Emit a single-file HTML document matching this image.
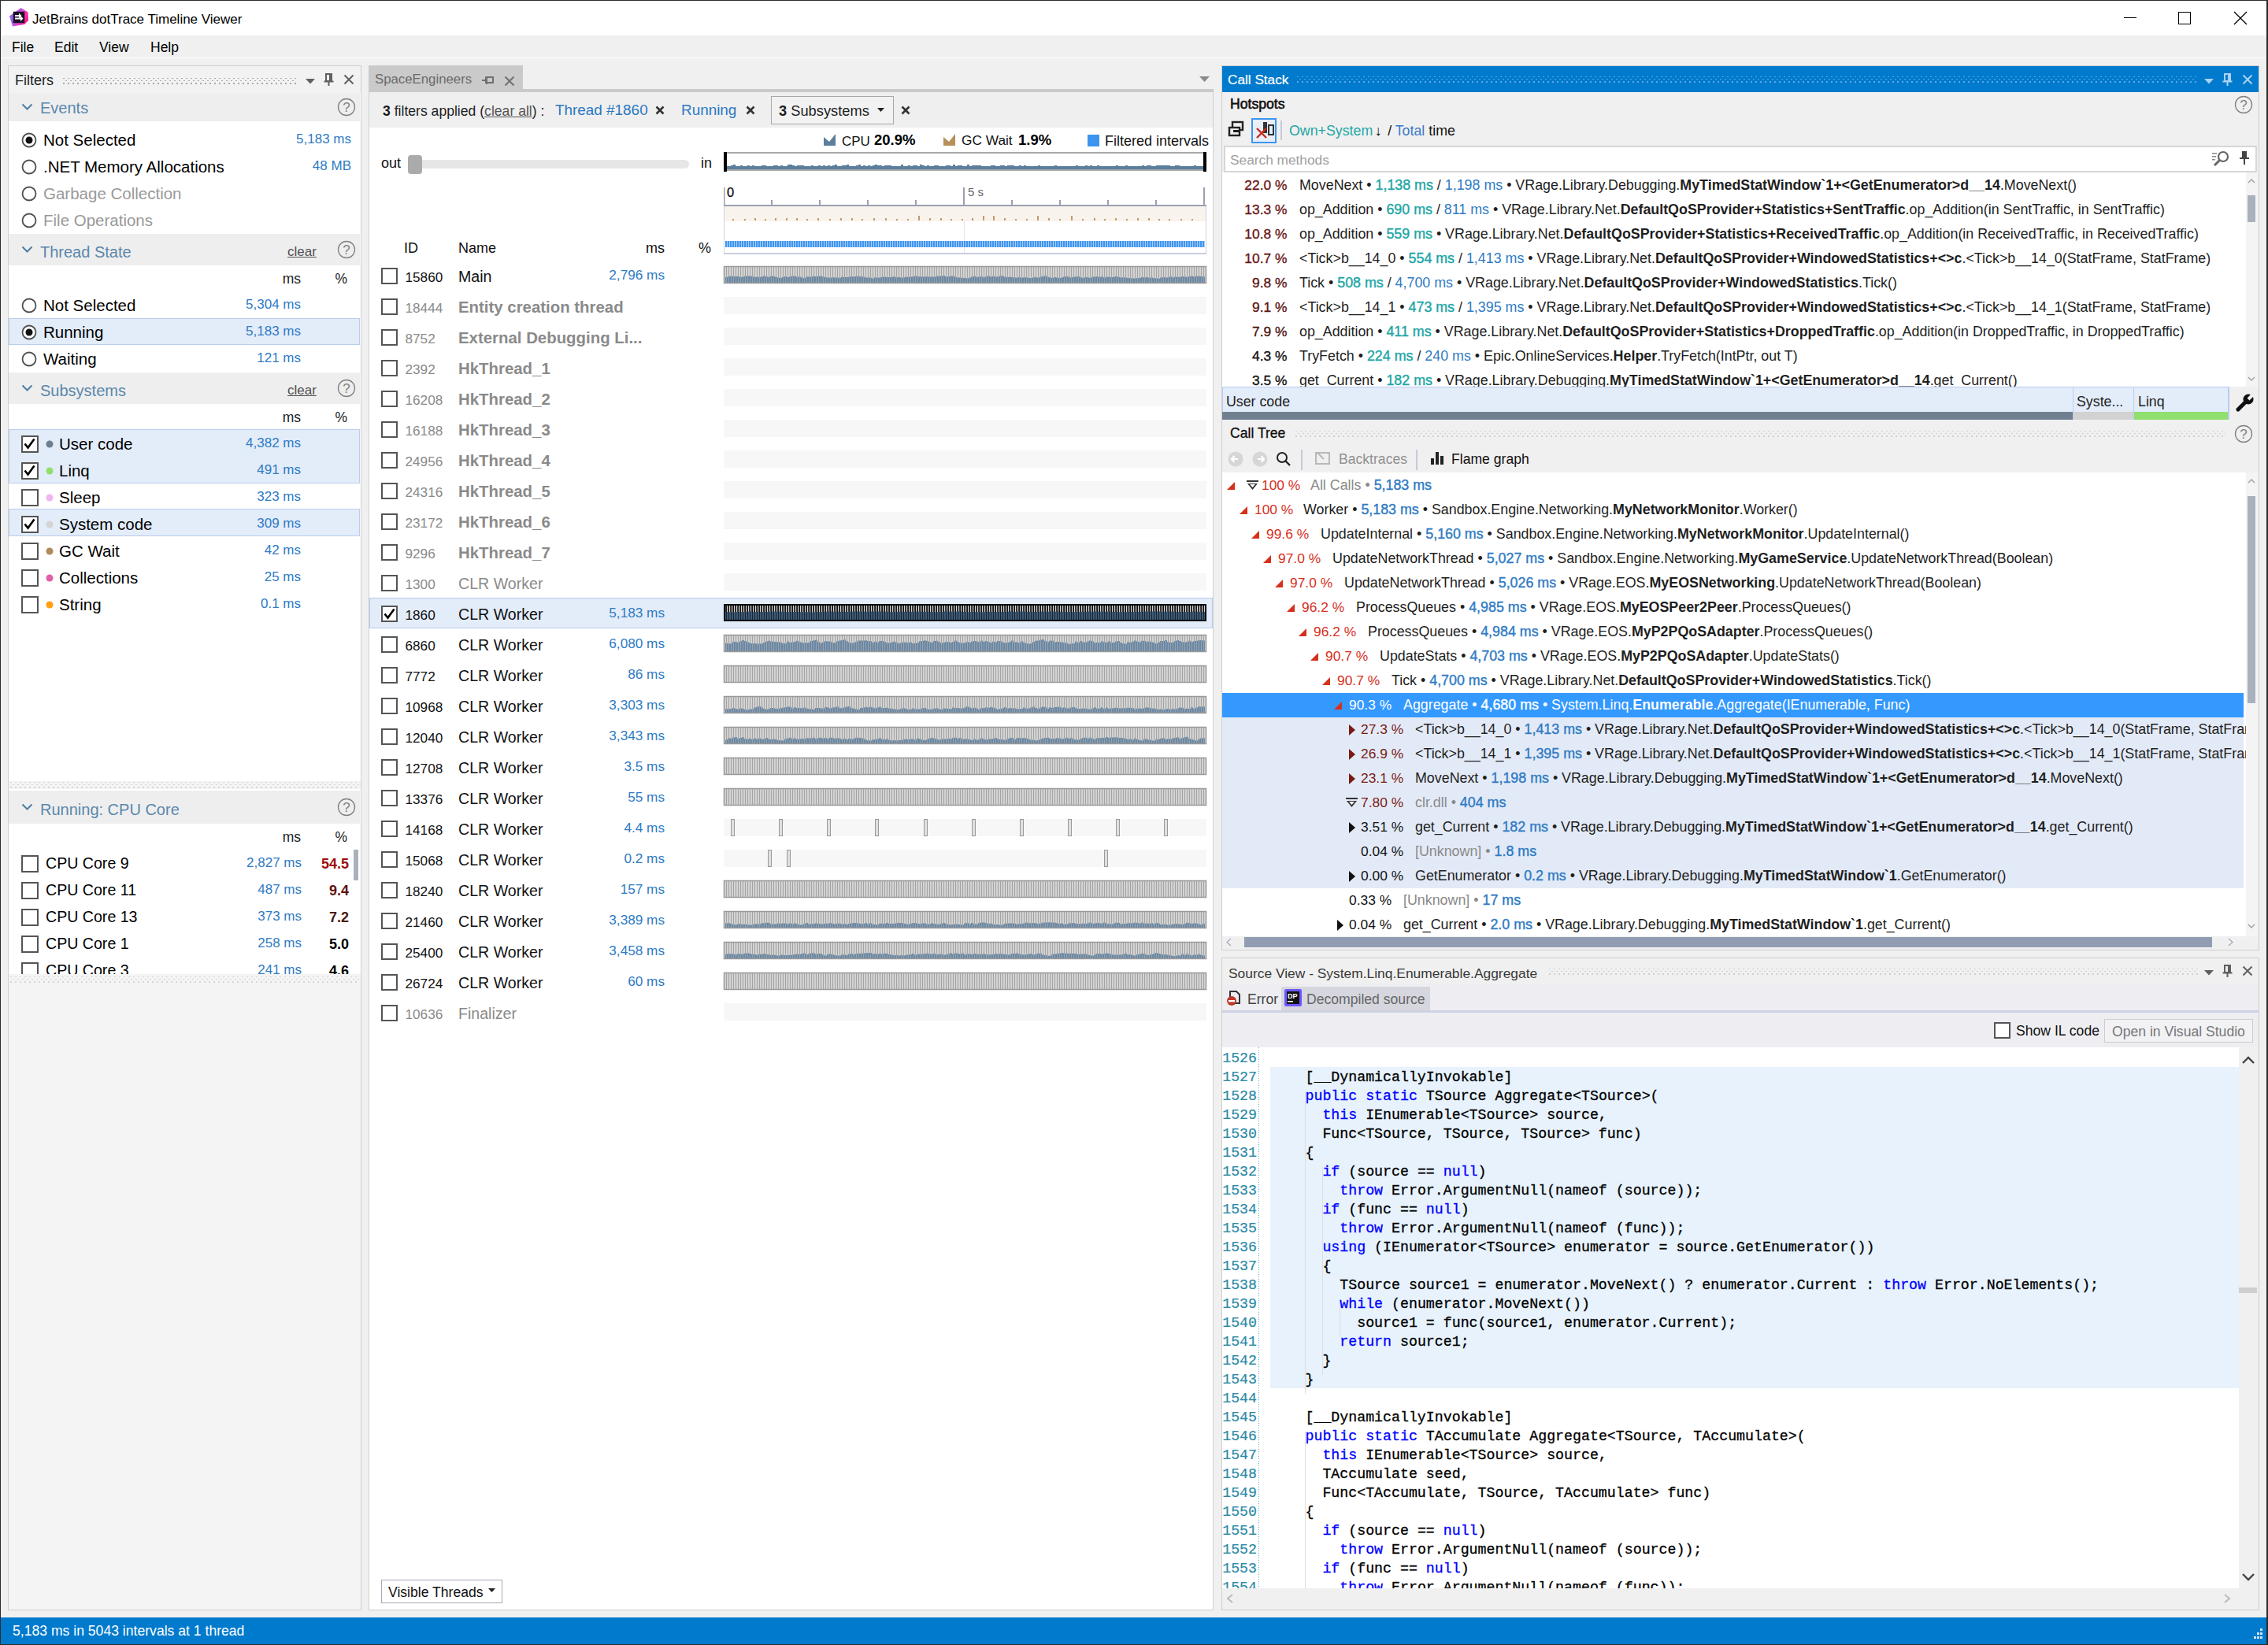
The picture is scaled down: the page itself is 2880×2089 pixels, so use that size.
<!DOCTYPE html><html><head><meta charset='utf-8'><style>
html,body{margin:0;padding:0;width:2880px;height:2089px;overflow:hidden;background:#f0f0f0}
.a{position:absolute;display:block}
.t{position:absolute;white-space:pre;line-height:1;font-family:"Liberation Sans",sans-serif}
svg.a{overflow:visible}
.sb{-webkit-text-stroke:0.4px currentColor}
</style></head><body>
<div class='a' style='left:0px;top:0px;width:2880px;height:2089px;background:#f0f0f0;'></div>
<div class='a' style='left:0px;top:0px;width:2880px;height:45px;background:#ffffff;'></div>
<svg class='a' style='left:8px;top:6px;' width='36' height='32' viewBox='0 0 36 32'><defs><linearGradient id='jbg' x1='0' y1='0.3' x2='1' y2='0.7'><stop offset='0' stop-color='#7a6cff'/><stop offset='0.5' stop-color='#d04ce0'/><stop offset='0.75' stop-color='#ff2fb0'/><stop offset='1' stop-color='#ff1080'/></linearGradient></defs>
<polygon points='4,14.5 18.5,4 27.5,9.5 28,20 23,25 8,27.5' fill='url(#jbg)'/>
<rect x='8.75' y='8.75' width='14.5' height='14.5' fill='#1a1024'/>
<path d='M11 13 h5 v-2.5 l3.5 3.5 l-3.5 3.5 v-2.5 h-5z' fill='#fff'/>
<path d='M11 16.5 h7 v-2.5 l3.5 3.5 l-3.5 3.5 v-2.5 h-7z' fill='#fff'/></svg>
<div class='t' style='left:41px;top:15.55px;font-size:17px;color:#000;font-weight:400;'>JetBrains dotTrace Timeline Viewer</div>
<div class='a' style='left:2697px;top:22px;width:16px;height:1.3px;background:#000;'></div>
<div class='a' style='left:2766px;top:15px;width:16px;height:16px;box-sizing:border-box;border:1.3px solid #000;'></div>
<svg class='a' style='left:2836px;top:14px;' width='18' height='18' viewBox='0 0 18 18'><path d='M1 1 L17 17 M17 1 L1 17' stroke='#000' stroke-width='1.3'/></svg>
<div class='t' style='left:15px;top:52.12px;font-size:17.5px;color:#000;font-weight:400;'>File</div>
<div class='t' style='left:69px;top:52.12px;font-size:17.5px;color:#000;font-weight:400;'>Edit</div>
<div class='t' style='left:126px;top:52.12px;font-size:17.5px;color:#000;font-weight:400;'>View</div>
<div class='t' style='left:191px;top:52.12px;font-size:17.5px;color:#000;font-weight:400;'>Help</div>
<div class='a' style='left:0px;top:73px;width:2880px;height:1.3px;background:#ffffff;'></div>
<div class='a' style='left:0px;top:0px;width:1px;height:2089px;background:#2b2b2b;'></div>
<div class='a' style='left:0px;top:0px;width:2880px;height:1px;background:#2b2b2b;'></div>
<div class='a' style='left:2878px;top:0px;width:2px;height:2089px;background:#2b2b2b;'></div>
<div class='a' style='left:0px;top:2088px;width:2880px;height:1px;background:#2b2b2b;'></div>
<div class='a' style='left:10px;top:83px;width:449px;height:1962px;background:#f4f4f4;box-sizing:border-box;border:1px solid #cfcfcf;'></div>
<div class='a' style='left:11px;top:84px;width:447px;height:34px;background:#f2f2f2;'></div>
<div class='t' style='left:19px;top:92.70px;font-size:18px;color:#1e1e1e;font-weight:400;'>Filters</div>
<svg class='a' style='left:80px;top:99px;' width='296' height='8' viewBox='0 0 296 8'><defs><pattern id='gp1' width='6' height='8' patternUnits='userSpaceOnUse'><rect x='0' y='0' width='2' height='1' fill='#a9a9a9'/><rect x='3' y='3' width='2' height='1' fill='#a9a9a9'/><rect x='0' y='6' width='2' height='2' fill='#a9a9a9'/></pattern></defs><rect width='296' height='8' fill='url(#gp1)'/></svg>
<svg class='a' style='left:388px;top:100px;' width='13' height='8' viewBox='0 0 13 8'><polygon points='0,0 12,0 6,6.5' fill='#606060'/></svg>
<svg class='a' style='left:411px;top:93px;' width='13' height='17' viewBox='0 0 13 17'><rect x='3' y='1' width='7' height='9' fill='none' stroke='#606060' stroke-width='2'/><rect x='7' y='1' width='3' height='9' fill='#606060'/><rect x='0.5' y='9.5' width='12' height='2' fill='#606060'/><rect x='5.5' y='11' width='2' height='5' fill='#606060'/></svg>
<svg class='a' style='left:436px;top:94px;' width='14' height='14' viewBox='0 0 14 14'><path d='M1.5 1.5 L12.5 12.5 M12.5 1.5 L1.5 12.5' stroke='#606060' stroke-width='2'/></svg>
<div class='a' style='left:11px;top:118px;width:447px;height:874px;background:#ffffff;'></div>
<div class='a' style='left:11px;top:118px;width:446px;height:36px;background:#eeeeee;'></div>
<svg class='a' style='left:27px;top:131.0px;' width='15' height='10' viewBox='0 0 15 10'><path d='M1.5 1.5 L7.5 7.5 L13.5 1.5' fill='none' stroke='#4d7fa6' stroke-width='2'/></svg>
<div class='t' style='left:51px;top:126.50px;font-size:20px;color:#5a87ac;font-weight:400;'>Events</div>
<svg class='a' style='left:428px;top:124.0px;' width='24' height='24' viewBox='0 0 24 24'><circle cx='12' cy='12' r='10.5' fill='none' stroke='#808080' stroke-width='1.3'/><text x='12' y='18' font-family='Liberation Sans' font-size='17' fill='#808080' text-anchor='middle'>?</text></svg>
<svg class='a' style='left:26.5px;top:167.5px;' width='20' height='20' viewBox='0 0 20 20'><circle cx='10' cy='10' r='8.5' fill='#fff' stroke='#505050' stroke-width='1.8'/><circle cx='10' cy='10' r='4.5' fill='#111'/></svg>
<div class='t' style='left:55px;top:167.57px;font-size:20.5px;color:#000;font-weight:400;'>Not Selected</div>
<div class='t' style='left:446px;transform:translateX(-100%);top:168.05px;font-size:17px;color:#2f7bc4;font-weight:400;'>5,183 ms</div>
<svg class='a' style='left:26.5px;top:201.5px;' width='20' height='20' viewBox='0 0 20 20'><circle cx='10' cy='10' r='8.5' fill='#fff' stroke='#505050' stroke-width='1.8'/></svg>
<div class='t' style='left:55px;top:201.57px;font-size:20.5px;color:#000;font-weight:400;'>.NET Memory Allocations</div>
<div class='t' style='left:446px;transform:translateX(-100%);top:202.05px;font-size:17px;color:#2f7bc4;font-weight:400;'>48 MB</div>
<svg class='a' style='left:26.5px;top:235.5px;' width='20' height='20' viewBox='0 0 20 20'><circle cx='10' cy='10' r='8.5' fill='#fff' stroke='#505050' stroke-width='1.8'/></svg>
<div class='t' style='left:55px;top:235.57px;font-size:20.5px;color:#999;font-weight:400;'>Garbage Collection</div>
<svg class='a' style='left:26.5px;top:269.5px;' width='20' height='20' viewBox='0 0 20 20'><circle cx='10' cy='10' r='8.5' fill='#fff' stroke='#505050' stroke-width='1.8'/></svg>
<div class='t' style='left:55px;top:269.57px;font-size:20.5px;color:#999;font-weight:400;'>File Operations</div>
<div class='a' style='left:11px;top:297px;width:446px;height:40px;background:#eeeeee;'></div>
<svg class='a' style='left:27px;top:312.0px;' width='15' height='10' viewBox='0 0 15 10'><path d='M1.5 1.5 L7.5 7.5 L13.5 1.5' fill='none' stroke='#4d7fa6' stroke-width='2'/></svg>
<div class='t' style='left:51px;top:309.50px;font-size:20px;color:#5a87ac;font-weight:400;'>Thread State</div>
<div class='t' style='left:365px;top:310.55px;font-size:17px;color:#505050;font-weight:400;text-decoration:underline;'>clear</div>
<svg class='a' style='left:428px;top:305.0px;' width='24' height='24' viewBox='0 0 24 24'><circle cx='12' cy='12' r='10.5' fill='none' stroke='#808080' stroke-width='1.3'/><text x='12' y='18' font-family='Liberation Sans' font-size='17' fill='#808080' text-anchor='middle'>?</text></svg>
<div class='t' style='left:382px;transform:translateX(-100%);top:346.12px;font-size:17.5px;color:#222;font-weight:400;'>ms</div>
<div class='t' style='left:441px;transform:translateX(-100%);top:346.12px;font-size:17.5px;color:#222;font-weight:400;'>%</div>
<div class='a' style='left:11px;top:404px;width:446px;height:34px;background:#e3ecf9;box-sizing:border-box;border:1px solid #b9cdee;'></div>
<svg class='a' style='left:26.5px;top:377.5px;' width='20' height='20' viewBox='0 0 20 20'><circle cx='10' cy='10' r='8.5' fill='#fff' stroke='#505050' stroke-width='1.8'/></svg>
<div class='t' style='left:55px;top:377.57px;font-size:20.5px;color:#000;font-weight:400;'>Not Selected</div>
<div class='t' style='left:382px;transform:translateX(-100%);top:377.55px;font-size:17px;color:#2f7bc4;font-weight:400;'>5,304 ms</div>
<svg class='a' style='left:26.5px;top:411.5px;' width='20' height='20' viewBox='0 0 20 20'><circle cx='10' cy='10' r='8.5' fill='#fff' stroke='#505050' stroke-width='1.8'/><circle cx='10' cy='10' r='4.5' fill='#111'/></svg>
<div class='t' style='left:55px;top:411.57px;font-size:20.5px;color:#000;font-weight:400;'>Running</div>
<div class='t' style='left:382px;transform:translateX(-100%);top:411.55px;font-size:17px;color:#2f7bc4;font-weight:400;'>5,183 ms</div>
<svg class='a' style='left:26.5px;top:445.5px;' width='20' height='20' viewBox='0 0 20 20'><circle cx='10' cy='10' r='8.5' fill='#fff' stroke='#505050' stroke-width='1.8'/></svg>
<div class='t' style='left:55px;top:445.57px;font-size:20.5px;color:#000;font-weight:400;'>Waiting</div>
<div class='t' style='left:382px;transform:translateX(-100%);top:445.55px;font-size:17px;color:#2f7bc4;font-weight:400;'>121 ms</div>
<div class='a' style='left:11px;top:473px;width:446px;height:40px;background:#eeeeee;'></div>
<svg class='a' style='left:27px;top:488.0px;' width='15' height='10' viewBox='0 0 15 10'><path d='M1.5 1.5 L7.5 7.5 L13.5 1.5' fill='none' stroke='#4d7fa6' stroke-width='2'/></svg>
<div class='t' style='left:51px;top:485.50px;font-size:20px;color:#5a87ac;font-weight:400;'>Subsystems</div>
<div class='t' style='left:365px;top:486.55px;font-size:17px;color:#505050;font-weight:400;text-decoration:underline;'>clear</div>
<svg class='a' style='left:428px;top:481.0px;' width='24' height='24' viewBox='0 0 24 24'><circle cx='12' cy='12' r='10.5' fill='none' stroke='#808080' stroke-width='1.3'/><text x='12' y='18' font-family='Liberation Sans' font-size='17' fill='#808080' text-anchor='middle'>?</text></svg>
<div class='t' style='left:382px;transform:translateX(-100%);top:522.12px;font-size:17.5px;color:#222;font-weight:400;'>ms</div>
<div class='t' style='left:441px;transform:translateX(-100%);top:522.12px;font-size:17.5px;color:#222;font-weight:400;'>%</div>
<div class='a' style='left:11px;top:545px;width:446px;height:69px;background:#e3ecf9;box-sizing:border-box;border:1px solid #b9cdee;'></div>
<div class='a' style='left:11px;top:646px;width:446px;height:35px;background:#e3ecf9;box-sizing:border-box;border:1px solid #b9cdee;'></div>
<svg class='a' style='left:27px;top:552.5px;' width='22' height='22' viewBox='0 0 22 22'><rect x='1' y='1' width='20' height='20' fill='#fff' stroke='#555' stroke-width='2'/><path d='M4.5 10.5 L8.5 15.5 L16.5 4.5' fill='none' stroke='#000' stroke-width='2.6'/></svg>
<svg class='a' style='left:58px;top:558.5px;' width='10' height='10' viewBox='0 0 10 10'><circle cx='5' cy='5' r='4.5' fill='#6e7f8f'/></svg>
<div class='t' style='left:75px;top:553.58px;font-size:20.5px;color:#000;font-weight:400;'>User code</div>
<div class='t' style='left:382px;transform:translateX(-100%);top:553.55px;font-size:17px;color:#2f7bc4;font-weight:400;'>4,382 ms</div>
<svg class='a' style='left:27px;top:586.5px;' width='22' height='22' viewBox='0 0 22 22'><rect x='1' y='1' width='20' height='20' fill='#fff' stroke='#555' stroke-width='2'/><path d='M4.5 10.5 L8.5 15.5 L16.5 4.5' fill='none' stroke='#000' stroke-width='2.6'/></svg>
<svg class='a' style='left:58px;top:592.5px;' width='10' height='10' viewBox='0 0 10 10'><circle cx='5' cy='5' r='4.5' fill='#8fe06a'/></svg>
<div class='t' style='left:75px;top:587.58px;font-size:20.5px;color:#000;font-weight:400;'>Linq</div>
<div class='t' style='left:382px;transform:translateX(-100%);top:587.55px;font-size:17px;color:#2f7bc4;font-weight:400;'>491 ms</div>
<svg class='a' style='left:27px;top:620.5px;' width='22' height='22' viewBox='0 0 22 22'><rect x='1' y='1' width='20' height='20' fill='#fff' stroke='#555' stroke-width='2'/></svg>
<svg class='a' style='left:58px;top:626.5px;' width='10' height='10' viewBox='0 0 10 10'><circle cx='5' cy='5' r='4.5' fill='#f0b4f0'/></svg>
<div class='t' style='left:75px;top:621.58px;font-size:20.5px;color:#000;font-weight:400;'>Sleep</div>
<div class='t' style='left:382px;transform:translateX(-100%);top:621.55px;font-size:17px;color:#2f7bc4;font-weight:400;'>323 ms</div>
<svg class='a' style='left:27px;top:654.5px;' width='22' height='22' viewBox='0 0 22 22'><rect x='1' y='1' width='20' height='20' fill='#fff' stroke='#555' stroke-width='2'/><path d='M4.5 10.5 L8.5 15.5 L16.5 4.5' fill='none' stroke='#000' stroke-width='2.6'/></svg>
<svg class='a' style='left:58px;top:660.5px;' width='10' height='10' viewBox='0 0 10 10'><circle cx='5' cy='5' r='4.5' fill='#d4d4d4'/></svg>
<div class='t' style='left:75px;top:655.58px;font-size:20.5px;color:#000;font-weight:400;'>System code</div>
<div class='t' style='left:382px;transform:translateX(-100%);top:655.55px;font-size:17px;color:#2f7bc4;font-weight:400;'>309 ms</div>
<svg class='a' style='left:27px;top:688.5px;' width='22' height='22' viewBox='0 0 22 22'><rect x='1' y='1' width='20' height='20' fill='#fff' stroke='#555' stroke-width='2'/></svg>
<svg class='a' style='left:58px;top:694.5px;' width='10' height='10' viewBox='0 0 10 10'><circle cx='5' cy='5' r='4.5' fill='#b08a5a'/></svg>
<div class='t' style='left:75px;top:689.58px;font-size:20.5px;color:#000;font-weight:400;'>GC Wait</div>
<div class='t' style='left:382px;transform:translateX(-100%);top:689.55px;font-size:17px;color:#2f7bc4;font-weight:400;'>42 ms</div>
<svg class='a' style='left:27px;top:722.5px;' width='22' height='22' viewBox='0 0 22 22'><rect x='1' y='1' width='20' height='20' fill='#fff' stroke='#555' stroke-width='2'/></svg>
<svg class='a' style='left:58px;top:728.5px;' width='10' height='10' viewBox='0 0 10 10'><circle cx='5' cy='5' r='4.5' fill='#e060a8'/></svg>
<div class='t' style='left:75px;top:723.58px;font-size:20.5px;color:#000;font-weight:400;'>Collections</div>
<div class='t' style='left:382px;transform:translateX(-100%);top:723.55px;font-size:17px;color:#2f7bc4;font-weight:400;'>25 ms</div>
<svg class='a' style='left:27px;top:756.5px;' width='22' height='22' viewBox='0 0 22 22'><rect x='1' y='1' width='20' height='20' fill='#fff' stroke='#555' stroke-width='2'/></svg>
<svg class='a' style='left:58px;top:762.5px;' width='10' height='10' viewBox='0 0 10 10'><circle cx='5' cy='5' r='4.5' fill='#ffa010'/></svg>
<div class='t' style='left:75px;top:757.58px;font-size:20.5px;color:#000;font-weight:400;'>String</div>
<div class='t' style='left:382px;transform:translateX(-100%);top:757.55px;font-size:17px;color:#2f7bc4;font-weight:400;'>0.1 ms</div>
<div class='a' style='left:11px;top:992px;width:447px;height:10px;background:#f4f4f4;'></div>
<svg class='a' style='left:13px;top:993px;' width='443' height='8' viewBox='0 0 443 8'><defs><pattern id='gp2' width='6' height='8' patternUnits='userSpaceOnUse'><rect x='0' y='0' width='2' height='1' fill='#d6d6d6'/><rect x='3' y='3' width='2' height='1' fill='#d6d6d6'/><rect x='0' y='6' width='2' height='2' fill='#d6d6d6'/></pattern></defs><rect width='443' height='8' fill='url(#gp2)'/></svg>
<div class='a' style='left:11px;top:1002px;width:447px;height:235px;background:#ffffff;'></div>
<div class='a' style='left:11px;top:1004px;width:446px;height:42px;background:#eeeeee;'></div>
<svg class='a' style='left:27px;top:1020.0px;' width='15' height='10' viewBox='0 0 15 10'><path d='M1.5 1.5 L7.5 7.5 L13.5 1.5' fill='none' stroke='#4d7fa6' stroke-width='2'/></svg>
<div class='t' style='left:51px;top:1018.00px;font-size:20px;color:#5a87ac;font-weight:400;'>Running: CPU Core</div>
<svg class='a' style='left:428px;top:1013.0px;' width='24' height='24' viewBox='0 0 24 24'><circle cx='12' cy='12' r='10.5' fill='none' stroke='#808080' stroke-width='1.3'/><text x='12' y='18' font-family='Liberation Sans' font-size='17' fill='#808080' text-anchor='middle'>?</text></svg>
<div class='t' style='left:382px;transform:translateX(-100%);top:1055.12px;font-size:17.5px;color:#222;font-weight:400;'>ms</div>
<div class='t' style='left:441px;transform:translateX(-100%);top:1055.12px;font-size:17.5px;color:#222;font-weight:400;'>%</div>
<div class='a' style='left:11px;top:1078px;width:447px;height:159px;overflow:hidden'>
<svg class='a' style='left:16px;top:7.5px;' width='22' height='22' viewBox='0 0 22 22'><rect x='1' y='1' width='20' height='20' fill='#fff' stroke='#555' stroke-width='2'/></svg>
<div class='t' style='left:47px;top:9.34px;font-size:19.6px;color:#000;font-weight:400;'>CPU Core 9</div>
<div class='t' style='left:372px;transform:translateX(-100%);top:9.05px;font-size:17px;color:#2f7bc4;font-weight:400;'>2,827 ms</div>
<div class='t' style='left:432px;transform:translateX(-100%);top:9.70px;font-size:18px;color:#9e1010;font-weight:700;'>54.5</div>
<svg class='a' style='left:16px;top:41.5px;' width='22' height='22' viewBox='0 0 22 22'><rect x='1' y='1' width='20' height='20' fill='#fff' stroke='#555' stroke-width='2'/></svg>
<div class='t' style='left:47px;top:43.34px;font-size:19.6px;color:#000;font-weight:400;'>CPU Core 11</div>
<div class='t' style='left:372px;transform:translateX(-100%);top:43.05px;font-size:17px;color:#2f7bc4;font-weight:400;'>487 ms</div>
<div class='t' style='left:432px;transform:translateX(-100%);top:43.70px;font-size:18px;color:#601010;font-weight:700;'>9.4</div>
<svg class='a' style='left:16px;top:75.5px;' width='22' height='22' viewBox='0 0 22 22'><rect x='1' y='1' width='20' height='20' fill='#fff' stroke='#555' stroke-width='2'/></svg>
<div class='t' style='left:47px;top:77.34px;font-size:19.6px;color:#000;font-weight:400;'>CPU Core 13</div>
<div class='t' style='left:372px;transform:translateX(-100%);top:77.05px;font-size:17px;color:#2f7bc4;font-weight:400;'>373 ms</div>
<div class='t' style='left:432px;transform:translateX(-100%);top:77.70px;font-size:18px;color:#4a1a10;font-weight:700;'>7.2</div>
<svg class='a' style='left:16px;top:109.5px;' width='22' height='22' viewBox='0 0 22 22'><rect x='1' y='1' width='20' height='20' fill='#fff' stroke='#555' stroke-width='2'/></svg>
<div class='t' style='left:47px;top:111.34px;font-size:19.6px;color:#000;font-weight:400;'>CPU Core 1</div>
<div class='t' style='left:372px;transform:translateX(-100%);top:111.05px;font-size:17px;color:#2f7bc4;font-weight:400;'>258 ms</div>
<div class='t' style='left:432px;transform:translateX(-100%);top:111.70px;font-size:18px;color:#000;font-weight:700;'>5.0</div>
<svg class='a' style='left:16px;top:143.5px;' width='22' height='22' viewBox='0 0 22 22'><rect x='1' y='1' width='20' height='20' fill='#fff' stroke='#555' stroke-width='2'/></svg>
<div class='t' style='left:47px;top:145.34px;font-size:19.6px;color:#000;font-weight:400;'>CPU Core 3</div>
<div class='t' style='left:372px;transform:translateX(-100%);top:145.05px;font-size:17px;color:#2f7bc4;font-weight:400;'>241 ms</div>
<div class='t' style='left:432px;transform:translateX(-100%);top:145.70px;font-size:18px;color:#000;font-weight:700;'>4.6</div>
</div>
<div class='a' style='left:449px;top:1079px;width:6px;height:39px;background:#a9b1bd;'></div>
<div class='a' style='left:11px;top:1237px;width:447px;height:13px;background:#f4f4f4;'></div>
<svg class='a' style='left:13px;top:1240px;' width='443' height='8' viewBox='0 0 443 8'><defs><pattern id='gp3' width='6' height='8' patternUnits='userSpaceOnUse'><rect x='0' y='0' width='2' height='1' fill='#d6d6d6'/><rect x='3' y='3' width='2' height='1' fill='#d6d6d6'/><rect x='0' y='6' width='2' height='2' fill='#d6d6d6'/></pattern></defs><rect width='443' height='8' fill='url(#gp3)'/></svg>
<div class='a' style='left:468px;top:83px;width:196px;height:30px;background:#cacaca;'></div>
<div class='t' style='left:476px;top:93.22px;font-size:16.8px;color:#6a6a6a;font-weight:400;'>SpaceEngineers</div>
<svg class='a' style='left:611px;top:96px;' width='18' height='14' viewBox='0 0 18 14'><rect x='6' y='2' width='9' height='7' fill='none' stroke='#707070' stroke-width='2'/><rect x='1' y='5' width='6' height='2' fill='#707070'/><rect x='6' y='1' width='2' height='10' fill='#707070'/></svg>
<svg class='a' style='left:640px;top:96px;' width='14' height='14' viewBox='0 0 14 14'><path d='M1.5 1.5 L12.5 12.5 M12.5 1.5 L1.5 12.5' stroke='#707070' stroke-width='2'/></svg>
<svg class='a' style='left:1523px;top:97px;' width='14' height='8' viewBox='0 0 14 8'><polygon points='0,0 13,0 6.5,7' fill='#8a8a8a'/></svg>
<div class='a' style='left:468px;top:113px;width:1073px;height:4px;background:#cacaca;'></div>
<div class='a' style='left:468px;top:117px;width:1073px;height:1928px;background:#ffffff;box-sizing:border-box;border:1px solid #cfcfcf;'></div>
<div class='a' style='left:469px;top:117px;width:1071px;height:45px;background:#efefef;'></div>
<div class='t' style='left:486px;top:132.54px;font-size:17.6px;color:#1e1e1e;font-weight:400;'><b>3</b> filters applied (<u style='color:#555'>clear all</u>) :</div>
<div class='t' style='left:705px;top:131.44px;font-size:18.9px;color:#2b79c2;font-weight:400;'>Thread #1860</div>
<svg class='a' style='left:832px;top:134px;' width='12' height='12' viewBox='0 0 12 12'><path d='M1.5 1.5 L10.5 10.5 M10.5 1.5 L1.5 10.5' stroke='#333' stroke-width='2.6'/></svg>
<div class='t' style='left:865px;top:131.44px;font-size:18.9px;color:#2b79c2;font-weight:400;'>Running</div>
<svg class='a' style='left:947px;top:134px;' width='12' height='12' viewBox='0 0 12 12'><path d='M1.5 1.5 L10.5 10.5 M10.5 1.5 L1.5 10.5' stroke='#333' stroke-width='2.6'/></svg>
<div class='a' style='left:979px;top:122px;width:156px;height:36px;background:#f2f2f2;box-sizing:border-box;border:1px solid #a8a8a8;'></div>
<div class='t' style='left:989px;top:131.94px;font-size:18.3px;color:#1e1e1e;font-weight:400;'><b>3</b> Subsystems</div>
<svg class='a' style='left:1114px;top:137px;' width='10' height='6' viewBox='0 0 10 6'><polygon points='0,0 9,0 4.5,5' fill='#222'/></svg>
<svg class='a' style='left:1144px;top:134px;' width='12' height='12' viewBox='0 0 12 12'><path d='M1.5 1.5 L10.5 10.5 M10.5 1.5 L1.5 10.5' stroke='#333' stroke-width='2.6'/></svg>
<svg class='a' style='left:1046px;top:170px;' width='16' height='16' viewBox='0 0 16 16'><polygon points='0,4 7,10 15,0 15,15 0,15' fill='#5d7f9c'/></svg>
<div class='t' style='left:1069px;top:170.55px;font-size:17px;color:#111;font-weight:400;'>CPU</div>
<div class='t' style='left:1110px;top:169.28px;font-size:18.5px;color:#000;font-weight:700;'>20.9%</div>
<svg class='a' style='left:1198px;top:170px;' width='16' height='16' viewBox='0 0 16 16'><polygon points='0,4 7,10 15,0 15,15 0,15' fill='#b8905a'/></svg>
<div class='t' style='left:1221px;top:170.29px;font-size:17.3px;color:#111;font-weight:400;'>GC Wait</div>
<div class='t' style='left:1293px;top:169.28px;font-size:18.5px;color:#000;font-weight:700;'>1.9%</div>
<div class='a' style='left:1381px;top:171px;width:15px;height:15px;background:#3d94f0;'></div>
<div class='t' style='left:1403px;top:169.70px;font-size:18px;color:#111;font-weight:400;'>Filtered intervals</div>
<div class='t' style='left:484px;top:197.70px;font-size:18px;color:#111;font-weight:400;'>out</div>
<div class='a' style='left:519px;top:203px;width:356px;height:11px;background:#e6e6e6;border-radius:6px'></div>
<div class='a' style='left:518px;top:197px;width:18px;height:24px;background:#ababab;border-radius:4px'></div>
<div class='t' style='left:890px;top:197.70px;font-size:18px;color:#111;font-weight:400;'>in</div>
<svg class='a' style='left:919px;top:193px;' width='613' height='25' viewBox='0 0 613 25'><rect x='0' y='0' width='613' height='2' fill='#a9a9a9'/><rect x='0' y='22' width='613' height='2' fill='#a9a9a9'/><rect x='3' y='18' width='3' height='4' fill='#5b7e9c'/><rect x='6' y='18' width='3' height='4' fill='#5b7e9c'/><rect x='9' y='17' width='3' height='5' fill='#5b7e9c'/><rect x='12' y='16' width='3' height='6' fill='#5b7e9c'/><rect x='15' y='18' width='3' height='4' fill='#5b7e9c'/><rect x='18' y='18' width='3' height='4' fill='#5b7e9c'/><rect x='21' y='17' width='3' height='5' fill='#5b7e9c'/><rect x='24' y='18' width='3' height='4' fill='#5b7e9c'/><rect x='27' y='18' width='3' height='4' fill='#5b7e9c'/><rect x='30' y='17' width='3' height='5' fill='#5b7e9c'/><rect x='33' y='18' width='3' height='4' fill='#5b7e9c'/><rect x='36' y='17' width='3' height='5' fill='#5b7e9c'/><rect x='39' y='18' width='3' height='4' fill='#5b7e9c'/><rect x='42' y='18' width='3' height='4' fill='#5b7e9c'/><rect x='45' y='18' width='3' height='4' fill='#5b7e9c'/><rect x='48' y='17' width='3' height='5' fill='#5b7e9c'/><rect x='51' y='17' width='3' height='5' fill='#5b7e9c'/><rect x='54' y='18' width='3' height='4' fill='#5b7e9c'/><rect x='57' y='18' width='3' height='4' fill='#5b7e9c'/><rect x='60' y='18' width='3' height='4' fill='#5b7e9c'/><rect x='63' y='17' width='3' height='5' fill='#5b7e9c'/><rect x='66' y='17' width='3' height='5' fill='#5b7e9c'/><rect x='69' y='18' width='3' height='4' fill='#5b7e9c'/><rect x='72' y='17' width='3' height='5' fill='#5b7e9c'/><rect x='75' y='18' width='3' height='4' fill='#5b7e9c'/><rect x='78' y='18' width='3' height='4' fill='#5b7e9c'/><rect x='81' y='16' width='3' height='6' fill='#5b7e9c'/><rect x='84' y='16' width='3' height='6' fill='#5b7e9c'/><rect x='87' y='17' width='3' height='5' fill='#5b7e9c'/><rect x='90' y='18' width='3' height='4' fill='#5b7e9c'/><rect x='93' y='17' width='3' height='5' fill='#5b7e9c'/><rect x='96' y='17' width='3' height='5' fill='#5b7e9c'/><rect x='99' y='17' width='3' height='5' fill='#5b7e9c'/><rect x='102' y='18' width='3' height='4' fill='#5b7e9c'/><rect x='105' y='18' width='3' height='4' fill='#5b7e9c'/><rect x='108' y='18' width='3' height='4' fill='#5b7e9c'/><rect x='111' y='17' width='3' height='5' fill='#5b7e9c'/><rect x='114' y='18' width='3' height='4' fill='#5b7e9c'/><rect x='117' y='18' width='3' height='4' fill='#5b7e9c'/><rect x='120' y='17' width='3' height='5' fill='#5b7e9c'/><rect x='123' y='18' width='3' height='4' fill='#5b7e9c'/><rect x='126' y='17' width='3' height='5' fill='#5b7e9c'/><rect x='129' y='18' width='3' height='4' fill='#5b7e9c'/><rect x='132' y='17' width='3' height='5' fill='#5b7e9c'/><rect x='135' y='18' width='3' height='4' fill='#5b7e9c'/><rect x='138' y='17' width='3' height='5' fill='#5b7e9c'/><rect x='141' y='16' width='3' height='6' fill='#5b7e9c'/><rect x='144' y='18' width='3' height='4' fill='#5b7e9c'/><rect x='147' y='18' width='3' height='4' fill='#5b7e9c'/><rect x='150' y='17' width='3' height='5' fill='#5b7e9c'/><rect x='153' y='17' width='3' height='5' fill='#5b7e9c'/><rect x='156' y='16' width='3' height='6' fill='#5b7e9c'/><rect x='159' y='18' width='3' height='4' fill='#5b7e9c'/><rect x='162' y='18' width='3' height='4' fill='#5b7e9c'/><rect x='165' y='18' width='3' height='4' fill='#5b7e9c'/><rect x='168' y='17' width='3' height='5' fill='#5b7e9c'/><rect x='171' y='16' width='3' height='6' fill='#5b7e9c'/><rect x='174' y='18' width='3' height='4' fill='#5b7e9c'/><rect x='177' y='17' width='3' height='5' fill='#5b7e9c'/><rect x='180' y='18' width='3' height='4' fill='#5b7e9c'/><rect x='183' y='17' width='3' height='5' fill='#5b7e9c'/><rect x='186' y='18' width='3' height='4' fill='#5b7e9c'/><rect x='189' y='17' width='3' height='5' fill='#5b7e9c'/><rect x='192' y='16' width='3' height='6' fill='#5b7e9c'/><rect x='195' y='17' width='3' height='5' fill='#5b7e9c'/><rect x='198' y='17' width='3' height='5' fill='#5b7e9c'/><rect x='201' y='18' width='3' height='4' fill='#5b7e9c'/><rect x='204' y='17' width='3' height='5' fill='#5b7e9c'/><rect x='207' y='17' width='3' height='5' fill='#5b7e9c'/><rect x='210' y='17' width='3' height='5' fill='#5b7e9c'/><rect x='213' y='18' width='3' height='4' fill='#5b7e9c'/><rect x='216' y='18' width='3' height='4' fill='#5b7e9c'/><rect x='219' y='18' width='3' height='4' fill='#5b7e9c'/><rect x='222' y='18' width='3' height='4' fill='#5b7e9c'/><rect x='225' y='16' width='3' height='6' fill='#5b7e9c'/><rect x='228' y='18' width='3' height='4' fill='#5b7e9c'/><rect x='231' y='18' width='3' height='4' fill='#5b7e9c'/><rect x='234' y='17' width='3' height='5' fill='#5b7e9c'/><rect x='237' y='18' width='3' height='4' fill='#5b7e9c'/><rect x='240' y='17' width='3' height='5' fill='#5b7e9c'/><rect x='243' y='17' width='3' height='5' fill='#5b7e9c'/><rect x='246' y='18' width='3' height='4' fill='#5b7e9c'/><rect x='249' y='16' width='3' height='6' fill='#5b7e9c'/><rect x='252' y='17' width='3' height='5' fill='#5b7e9c'/><rect x='255' y='18' width='3' height='4' fill='#5b7e9c'/><rect x='258' y='17' width='3' height='5' fill='#5b7e9c'/><rect x='261' y='18' width='3' height='4' fill='#5b7e9c'/><rect x='264' y='18' width='3' height='4' fill='#5b7e9c'/><rect x='267' y='17' width='3' height='5' fill='#5b7e9c'/><rect x='270' y='17' width='3' height='5' fill='#5b7e9c'/><rect x='273' y='18' width='3' height='4' fill='#5b7e9c'/><rect x='276' y='18' width='3' height='4' fill='#5b7e9c'/><rect x='279' y='18' width='3' height='4' fill='#5b7e9c'/><rect x='282' y='17' width='3' height='5' fill='#5b7e9c'/><rect x='285' y='17' width='3' height='5' fill='#5b7e9c'/><rect x='288' y='18' width='3' height='4' fill='#5b7e9c'/><rect x='291' y='16' width='3' height='6' fill='#5b7e9c'/><rect x='294' y='18' width='3' height='4' fill='#5b7e9c'/><rect x='297' y='17' width='3' height='5' fill='#5b7e9c'/><rect x='300' y='17' width='3' height='5' fill='#5b7e9c'/><rect x='303' y='18' width='3' height='4' fill='#5b7e9c'/><rect x='306' y='18' width='3' height='4' fill='#5b7e9c'/><rect x='309' y='16' width='3' height='6' fill='#5b7e9c'/><rect x='312' y='18' width='3' height='4' fill='#5b7e9c'/><rect x='315' y='17' width='3' height='5' fill='#5b7e9c'/><rect x='318' y='17' width='3' height='5' fill='#5b7e9c'/><rect x='321' y='17' width='3' height='5' fill='#5b7e9c'/><rect x='324' y='17' width='3' height='5' fill='#5b7e9c'/><rect x='327' y='18' width='3' height='4' fill='#5b7e9c'/><rect x='330' y='18' width='3' height='4' fill='#5b7e9c'/><rect x='333' y='18' width='3' height='4' fill='#5b7e9c'/><rect x='336' y='18' width='3' height='4' fill='#5b7e9c'/><rect x='339' y='17' width='3' height='5' fill='#5b7e9c'/><rect x='342' y='17' width='3' height='5' fill='#5b7e9c'/><rect x='345' y='18' width='3' height='4' fill='#5b7e9c'/><rect x='348' y='18' width='3' height='4' fill='#5b7e9c'/><rect x='351' y='17' width='3' height='5' fill='#5b7e9c'/><rect x='354' y='17' width='3' height='5' fill='#5b7e9c'/><rect x='357' y='18' width='3' height='4' fill='#5b7e9c'/><rect x='360' y='17' width='3' height='5' fill='#5b7e9c'/><rect x='363' y='17' width='3' height='5' fill='#5b7e9c'/><rect x='366' y='17' width='3' height='5' fill='#5b7e9c'/><rect x='369' y='18' width='3' height='4' fill='#5b7e9c'/><rect x='372' y='18' width='3' height='4' fill='#5b7e9c'/><rect x='375' y='17' width='3' height='5' fill='#5b7e9c'/><rect x='378' y='18' width='3' height='4' fill='#5b7e9c'/><rect x='381' y='17' width='3' height='5' fill='#5b7e9c'/><rect x='384' y='18' width='3' height='4' fill='#5b7e9c'/><rect x='387' y='18' width='3' height='4' fill='#5b7e9c'/><rect x='390' y='18' width='3' height='4' fill='#5b7e9c'/><rect x='393' y='18' width='3' height='4' fill='#5b7e9c'/><rect x='396' y='18' width='3' height='4' fill='#5b7e9c'/><rect x='399' y='17' width='3' height='5' fill='#5b7e9c'/><rect x='402' y='18' width='3' height='4' fill='#5b7e9c'/><rect x='405' y='18' width='3' height='4' fill='#5b7e9c'/><rect x='408' y='18' width='3' height='4' fill='#5b7e9c'/><rect x='411' y='18' width='3' height='4' fill='#5b7e9c'/><rect x='414' y='18' width='3' height='4' fill='#5b7e9c'/><rect x='417' y='18' width='3' height='4' fill='#5b7e9c'/><rect x='420' y='17' width='3' height='5' fill='#5b7e9c'/><rect x='423' y='18' width='3' height='4' fill='#5b7e9c'/><rect x='426' y='18' width='3' height='4' fill='#5b7e9c'/><rect x='429' y='18' width='3' height='4' fill='#5b7e9c'/><rect x='432' y='18' width='3' height='4' fill='#5b7e9c'/><rect x='435' y='18' width='3' height='4' fill='#5b7e9c'/><rect x='438' y='18' width='3' height='4' fill='#5b7e9c'/><rect x='441' y='18' width='3' height='4' fill='#5b7e9c'/><rect x='444' y='18' width='3' height='4' fill='#5b7e9c'/><rect x='447' y='17' width='3' height='5' fill='#5b7e9c'/><rect x='450' y='18' width='3' height='4' fill='#5b7e9c'/><rect x='453' y='18' width='3' height='4' fill='#5b7e9c'/><rect x='456' y='18' width='3' height='4' fill='#5b7e9c'/><rect x='459' y='17' width='3' height='5' fill='#5b7e9c'/><rect x='462' y='18' width='3' height='4' fill='#5b7e9c'/><rect x='465' y='17' width='3' height='5' fill='#5b7e9c'/><rect x='468' y='18' width='3' height='4' fill='#5b7e9c'/><rect x='471' y='18' width='3' height='4' fill='#5b7e9c'/><rect x='474' y='17' width='3' height='5' fill='#5b7e9c'/><rect x='477' y='18' width='3' height='4' fill='#5b7e9c'/><rect x='480' y='18' width='3' height='4' fill='#5b7e9c'/><rect x='483' y='18' width='3' height='4' fill='#5b7e9c'/><rect x='486' y='18' width='3' height='4' fill='#5b7e9c'/><rect x='489' y='18' width='3' height='4' fill='#5b7e9c'/><rect x='492' y='18' width='3' height='4' fill='#5b7e9c'/><rect x='495' y='18' width='3' height='4' fill='#5b7e9c'/><rect x='498' y='17' width='3' height='5' fill='#5b7e9c'/><rect x='501' y='18' width='3' height='4' fill='#5b7e9c'/><rect x='504' y='18' width='3' height='4' fill='#5b7e9c'/><rect x='507' y='18' width='3' height='4' fill='#5b7e9c'/><rect x='510' y='17' width='3' height='5' fill='#5b7e9c'/><rect x='513' y='18' width='3' height='4' fill='#5b7e9c'/><rect x='516' y='18' width='3' height='4' fill='#5b7e9c'/><rect x='519' y='18' width='3' height='4' fill='#5b7e9c'/><rect x='522' y='18' width='3' height='4' fill='#5b7e9c'/><rect x='525' y='18' width='3' height='4' fill='#5b7e9c'/><rect x='528' y='18' width='3' height='4' fill='#5b7e9c'/><rect x='531' y='17' width='3' height='5' fill='#5b7e9c'/><rect x='534' y='18' width='3' height='4' fill='#5b7e9c'/><rect x='537' y='17' width='3' height='5' fill='#5b7e9c'/><rect x='540' y='17' width='3' height='5' fill='#5b7e9c'/><rect x='543' y='18' width='3' height='4' fill='#5b7e9c'/><rect x='546' y='18' width='3' height='4' fill='#5b7e9c'/><rect x='549' y='17' width='3' height='5' fill='#5b7e9c'/><rect x='552' y='17' width='3' height='5' fill='#5b7e9c'/><rect x='555' y='17' width='3' height='5' fill='#5b7e9c'/><rect x='558' y='17' width='3' height='5' fill='#5b7e9c'/><rect x='561' y='17' width='3' height='5' fill='#5b7e9c'/><rect x='564' y='17' width='3' height='5' fill='#5b7e9c'/><rect x='567' y='18' width='3' height='4' fill='#5b7e9c'/><rect x='570' y='18' width='3' height='4' fill='#5b7e9c'/><rect x='573' y='17' width='3' height='5' fill='#5b7e9c'/><rect x='576' y='17' width='3' height='5' fill='#5b7e9c'/><rect x='579' y='18' width='3' height='4' fill='#5b7e9c'/><rect x='582' y='18' width='3' height='4' fill='#5b7e9c'/><rect x='585' y='18' width='3' height='4' fill='#5b7e9c'/><rect x='588' y='18' width='3' height='4' fill='#5b7e9c'/><rect x='591' y='18' width='3' height='4' fill='#5b7e9c'/><rect x='594' y='18' width='3' height='4' fill='#5b7e9c'/><rect x='597' y='17' width='3' height='5' fill='#5b7e9c'/><rect x='600' y='18' width='3' height='4' fill='#5b7e9c'/><rect x='603' y='18' width='3' height='4' fill='#5b7e9c'/><rect x='606' y='18' width='3' height='4' fill='#5b7e9c'/><rect x='609' y='18' width='3' height='4' fill='#5b7e9c'/><rect x='0' y='0' width='4' height='25' fill='#000'/><rect x='609' y='0' width='4' height='25' fill='#000'/></svg>
<svg class='a' style='left:919px;top:238px;' width='613' height='24' viewBox='0 0 613 24'><rect x='0' y='0' width='1.5' height='24' fill='#9aa0b2'/><rect x='60' y='16' width='2' height='8' fill='#9aa0b2'/><rect x='121' y='16' width='2' height='8' fill='#9aa0b2'/><rect x='182' y='16' width='2' height='8' fill='#9aa0b2'/><rect x='243' y='16' width='2' height='8' fill='#9aa0b2'/><rect x='304' y='0' width='2' height='24' fill='#9aa0b2'/><rect x='365' y='16' width='2' height='8' fill='#9aa0b2'/><rect x='426' y='16' width='2' height='8' fill='#9aa0b2'/><rect x='487' y='16' width='2' height='8' fill='#9aa0b2'/><rect x='548' y='16' width='2' height='8' fill='#9aa0b2'/><rect x='609' y='0' width='2' height='24' fill='#9aa0b2'/><rect x='0' y='22' width='613' height='2' fill='#9aa0b2'/></svg>
<div class='t' style='left:923px;top:235.97px;font-size:16.5px;color:#111;font-weight:400;-webkit-text-stroke:0.3px currentColor;'>0</div>
<div class='t' style='left:1229px;top:236.25px;font-size:15px;color:#666;font-weight:400;'>5 s</div>
<div class='a' style='left:920px;top:262px;width:612px;height:19px;background:#f8f3ed;'></div>
<svg class='a' style='left:920px;top:262px;' width='612' height='19' viewBox='0 0 612 19'><rect x='10' y='16' width='2' height='2' fill='#c49a68'/><rect x='25' y='16' width='2' height='2' fill='#c49a68'/><rect x='38' y='15' width='2' height='3' fill='#c49a68'/><rect x='51' y='16' width='2' height='2' fill='#c49a68'/><rect x='64' y='15' width='2' height='3' fill='#c49a68'/><rect x='78' y='15' width='2' height='3' fill='#c49a68'/><rect x='91' y='15' width='2' height='3' fill='#c49a68'/><rect x='104' y='16' width='2' height='2' fill='#c49a68'/><rect x='118' y='15' width='2' height='3' fill='#c49a68'/><rect x='133' y='16' width='2' height='2' fill='#c49a68'/><rect x='147' y='15' width='2' height='3' fill='#c49a68'/><rect x='161' y='15' width='2' height='3' fill='#c49a68'/><rect x='174' y='16' width='2' height='2' fill='#c49a68'/><rect x='189' y='15' width='2' height='3' fill='#c49a68'/><rect x='204' y='15' width='2' height='3' fill='#c49a68'/><rect x='218' y='16' width='2' height='2' fill='#c49a68'/><rect x='232' y='16' width='2' height='2' fill='#c49a68'/><rect x='246' y='12' width='2' height='6' fill='#c49a68'/><rect x='260' y='15' width='2' height='3' fill='#c49a68'/><rect x='274' y='15' width='2' height='3' fill='#c49a68'/><rect x='287' y='16' width='2' height='2' fill='#c49a68'/><rect x='301' y='16' width='2' height='2' fill='#c49a68'/><rect x='314' y='15' width='2' height='3' fill='#c49a68'/><rect x='328' y='12' width='2' height='6' fill='#c49a68'/><rect x='341' y='12' width='2' height='6' fill='#c49a68'/><rect x='355' y='15' width='2' height='3' fill='#c49a68'/><rect x='369' y='16' width='2' height='2' fill='#c49a68'/><rect x='383' y='16' width='2' height='2' fill='#c49a68'/><rect x='397' y='12' width='2' height='6' fill='#c49a68'/><rect x='411' y='15' width='2' height='3' fill='#c49a68'/><rect x='425' y='16' width='2' height='2' fill='#c49a68'/><rect x='440' y='12' width='2' height='6' fill='#c49a68'/><rect x='454' y='16' width='2' height='2' fill='#c49a68'/><rect x='469' y='15' width='2' height='3' fill='#c49a68'/><rect x='482' y='16' width='2' height='2' fill='#c49a68'/><rect x='496' y='15' width='2' height='3' fill='#c49a68'/><rect x='510' y='16' width='2' height='2' fill='#c49a68'/><rect x='524' y='15' width='2' height='3' fill='#c49a68'/><rect x='538' y='15' width='2' height='3' fill='#c49a68'/><rect x='551' y='16' width='2' height='2' fill='#c49a68'/><rect x='564' y='16' width='2' height='2' fill='#c49a68'/><rect x='579' y='16' width='2' height='2' fill='#c49a68'/><rect x='593' y='16' width='2' height='2' fill='#c49a68'/></svg>
<div class='a' style='left:919px;top:262px;width:1px;height:60px;background:#cfd0e0;'></div>
<div class='a' style='left:1531px;top:262px;width:1px;height:60px;background:#cfd0e0;'></div>
<div class='a' style='left:1224px;top:281px;width:1px;height:41px;background:#e4e4ef;'></div>
<div class='a' style='left:921px;top:306px;width:609px;height:8px;background:repeating-linear-gradient(90deg,#3f95f0 0 2px,#a9cff6 2px 3px)'></div>
<div class='a' style='left:919px;top:321px;width:613px;height:1.5px;background:#c9cde0;'></div>
<div class='t' style='left:513px;top:305.70px;font-size:18px;color:#111;font-weight:400;'>ID</div>
<div class='t' style='left:582px;top:305.70px;font-size:18px;color:#111;font-weight:400;'>Name</div>
<div class='t' style='left:844px;transform:translateX(-100%);top:305.70px;font-size:18px;color:#111;font-weight:400;'>ms</div>
<div class='t' style='left:903px;transform:translateX(-100%);top:305.70px;font-size:18px;color:#111;font-weight:400;'>%</div>
<svg width='0' height='0' style='position:absolute'><defs>
<pattern id='st' width='3' height='30' patternUnits='userSpaceOnUse'><rect width='3' height='30' fill='#d3d3d3'/><rect width='1' height='30' fill='#a3a3a3'/></pattern>
<pattern id='stb' width='3' height='30' patternUnits='userSpaceOnUse'><rect width='3' height='30' fill='#6a89a5'/><rect width='1' height='30' fill='#97a1ac'/></pattern>
<pattern id='sts' width='3' height='30' patternUnits='userSpaceOnUse'><rect width='3' height='30' fill='#161616'/><rect x='1' width='1.2' height='30' fill='#d6d6d6'/></pattern>
<pattern id='stsb' width='3' height='30' patternUnits='userSpaceOnUse'><rect width='3' height='30' fill='#3d5a77'/><rect width='1' height='30' fill='#1a2530'/></pattern>
</defs></svg>
<svg class='a' style='left:484px;top:340px;' width='21' height='21' viewBox='0 0 21 21'><rect x='1' y='1' width='19' height='19' fill='#fff' stroke='#555' stroke-width='2'/></svg>
<div class='t' style='left:514.5px;top:343.88px;font-size:17.2px;color:#111;font-weight:400;'>15860</div>
<div class='t' style='left:582px;top:341.84px;font-size:19.6px;color:#111;font-weight:400;'>Main</div>
<div class='t' style='left:844px;transform:translateX(-100%);top:341.38px;font-size:17.2px;color:#2f7bc4;font-weight:400;'>2,796 ms</div>
<svg class='a' style='left:919px;top:338px;' width='613' height='22' viewBox='0 0 613 22'><rect x='0' y='0' width='613' height='22' fill='url(#st)'/><path d='M2 21 L2 13.9 L5 13.9 L5 13.0 L8 13.0 L8 12.6 L11 12.6 L11 13.1 L14 13.1 L14 13.1 L17 13.1 L17 12.7 L20 12.7 L20 14.0 L23 14.0 L23 13.6 L26 13.6 L26 12.8 L29 12.8 L29 12.6 L32 12.6 L32 12.6 L35 12.6 L35 13.1 L38 13.1 L38 14.1 L41 14.1 L41 13.4 L44 13.4 L44 13.9 L47 13.9 L47 13.2 L50 13.2 L50 12.5 L53 12.5 L53 13.2 L56 13.2 L56 13.7 L59 13.7 L59 12.8 L62 12.8 L62 12.7 L65 12.7 L65 13.8 L68 13.8 L68 14.6 L71 14.6 L71 15.0 L74 15.0 L74 13.7 L77 13.7 L77 13.1 L80 13.1 L80 14.1 L83 14.1 L83 13.3 L86 13.3 L86 12.5 L89 12.5 L89 12.7 L92 12.7 L92 13.4 L95 13.4 L95 13.5 L98 13.5 L98 14.4 L101 14.4 L101 15.2 L104 15.2 L104 13.6 L107 13.6 L107 13.4 L110 13.4 L110 13.5 L113 13.5 L113 12.7 L116 12.7 L116 13.3 L119 13.3 L119 12.7 L122 12.7 L122 12.5 L125 12.5 L125 13.6 L128 13.6 L128 14.2 L131 14.2 L131 14.5 L134 14.5 L134 14.7 L137 14.7 L137 14.2 L140 14.2 L140 14.5 L143 14.5 L143 14.4 L146 14.4 L146 14.9 L149 14.9 L149 13.6 L152 13.6 L152 14.0 L155 14.0 L155 14.0 L158 14.0 L158 13.8 L161 13.8 L161 12.9 L164 12.9 L164 13.4 L167 13.4 L167 12.7 L170 12.7 L170 13.1 L173 13.1 L173 13.3 L176 13.3 L176 13.5 L179 13.5 L179 14.6 L182 14.6 L182 14.4 L185 14.4 L185 14.8 L188 14.8 L188 15.4 L191 15.4 L191 14.2 L194 14.2 L194 14.7 L197 14.7 L197 14.4 L200 14.4 L200 13.7 L203 13.7 L203 13.6 L206 13.6 L206 14.1 L209 14.1 L209 13.9 L212 13.9 L212 13.8 L215 13.8 L215 13.2 L218 13.2 L218 14.2 L221 14.2 L221 13.9 L224 13.9 L224 14.4 L227 14.4 L227 14.6 L230 14.6 L230 13.7 L233 13.7 L233 13.7 L236 13.7 L236 13.6 L239 13.6 L239 13.2 L242 13.2 L242 12.6 L245 12.6 L245 13.2 L248 13.2 L248 13.2 L251 13.2 L251 13.4 L254 13.4 L254 13.5 L257 13.5 L257 13.2 L260 13.2 L260 13.6 L263 13.6 L263 13.6 L266 13.6 L266 13.7 L269 13.7 L269 12.8 L272 12.8 L272 12.8 L275 12.8 L275 12.4 L278 12.4 L278 12.1 L281 12.1 L281 13.3 L284 13.3 L284 13.3 L287 13.3 L287 12.6 L290 12.6 L290 12.4 L293 12.4 L293 13.7 L296 13.7 L296 14.5 L299 14.5 L299 14.4 L302 14.4 L302 15.0 L305 15.0 L305 15.1 L308 15.1 L308 15.5 L311 15.5 L311 14.4 L314 14.4 L314 13.6 L317 13.6 L317 12.8 L320 12.8 L320 13.9 L323 13.9 L323 13.4 L326 13.4 L326 13.3 L329 13.3 L329 14.2 L332 14.2 L332 13.3 L335 13.3 L335 12.5 L338 12.5 L338 13.6 L341 13.6 L341 12.7 L344 12.7 L344 13.4 L347 13.4 L347 13.6 L350 13.6 L350 12.6 L353 12.6 L353 12.4 L356 12.4 L356 13.7 L359 13.7 L359 13.9 L362 13.9 L362 13.8 L365 13.8 L365 14.1 L368 14.1 L368 14.6 L371 14.6 L371 14.7 L374 14.7 L374 13.9 L377 13.9 L377 14.8 L380 14.8 L380 14.3 L383 14.3 L383 14.2 L386 14.2 L386 15.1 L389 15.1 L389 14.9 L392 14.9 L392 14.2 L395 14.2 L395 14.0 L398 14.0 L398 14.8 L401 14.8 L401 13.4 L404 13.4 L404 13.0 L407 13.0 L407 12.3 L410 12.3 L410 13.7 L413 13.7 L413 14.2 L416 14.2 L416 15.0 L419 15.0 L419 14.0 L422 14.0 L422 14.4 L425 14.4 L425 14.9 L428 14.9 L428 14.6 L431 14.6 L431 13.4 L434 13.4 L434 12.9 L437 12.9 L437 13.8 L440 13.8 L440 14.5 L443 14.5 L443 13.4 L446 13.4 L446 13.4 L449 13.4 L449 13.1 L452 13.1 L452 14.3 L455 14.3 L455 15.0 L458 15.0 L458 14.1 L461 14.1 L461 14.2 L464 14.2 L464 14.9 L467 14.9 L467 13.5 L470 13.5 L470 13.4 L473 13.4 L473 12.9 L476 12.9 L476 14.1 L479 14.1 L479 13.3 L482 13.3 L482 14.4 L485 14.4 L485 13.4 L488 13.4 L488 13.7 L491 13.7 L491 14.0 L494 14.0 L494 13.8 L497 13.8 L497 12.9 L500 12.9 L500 13.8 L503 13.8 L503 14.5 L506 14.5 L506 14.2 L509 14.2 L509 14.6 L512 14.6 L512 15.1 L515 15.1 L515 15.3 L518 15.3 L518 15.6 L521 15.6 L521 15.5 L524 15.5 L524 15.2 L527 15.2 L527 15.1 L530 15.1 L530 14.0 L533 14.0 L533 14.4 L536 14.4 L536 14.1 L539 14.1 L539 14.7 L542 14.7 L542 14.6 L545 14.6 L545 15.3 L548 15.3 L548 15.2 L551 15.2 L551 15.7 L554 15.7 L554 14.4 L557 14.4 L557 14.1 L560 14.1 L560 14.6 L563 14.6 L563 14.3 L566 14.3 L566 13.2 L569 13.2 L569 14.3 L572 14.3 L572 13.4 L575 13.4 L575 13.7 L578 13.7 L578 13.8 L581 13.8 L581 13.1 L584 13.1 L584 13.6 L587 13.6 L587 13.7 L590 13.7 L590 13.3 L593 13.3 L593 12.5 L596 12.5 L596 13.4 L599 13.4 L599 12.8 L602 12.8 L602 12.8 L605 12.8 L605 12.9 L608 12.9 L608 13.5 L611 13.5 L611 21 Z' fill='url(#stb)'/><rect x='0.5' y='0.5' width='612' height='21' fill='none' stroke='#999' stroke-width='1.5'/></svg>
<svg class='a' style='left:484px;top:379px;' width='21' height='21' viewBox='0 0 21 21'><rect x='1' y='1' width='19' height='19' fill='#fff' stroke='#555' stroke-width='2'/></svg>
<div class='t' style='left:514.5px;top:382.88px;font-size:17.2px;color:#8a8a8a;font-weight:400;'>18444</div>
<div class='t' style='left:582px;top:380.16px;font-size:20.4px;color:#8a8a8a;font-weight:700;'>Entity creation thread</div>
<div class='a' style='left:919px;top:377px;width:613px;height:22px;background:#f7f7f7;'></div>
<svg class='a' style='left:484px;top:418px;' width='21' height='21' viewBox='0 0 21 21'><rect x='1' y='1' width='19' height='19' fill='#fff' stroke='#555' stroke-width='2'/></svg>
<div class='t' style='left:514.5px;top:421.88px;font-size:17.2px;color:#8a8a8a;font-weight:400;'>8752</div>
<div class='t' style='left:582px;top:419.16px;font-size:20.4px;color:#8a8a8a;font-weight:700;'>External Debugging Li...</div>
<div class='a' style='left:919px;top:416px;width:613px;height:22px;background:#f7f7f7;'></div>
<svg class='a' style='left:484px;top:457px;' width='21' height='21' viewBox='0 0 21 21'><rect x='1' y='1' width='19' height='19' fill='#fff' stroke='#555' stroke-width='2'/></svg>
<div class='t' style='left:514.5px;top:460.88px;font-size:17.2px;color:#8a8a8a;font-weight:400;'>2392</div>
<div class='t' style='left:582px;top:458.16px;font-size:20.4px;color:#8a8a8a;font-weight:700;'>HkThread_1</div>
<div class='a' style='left:919px;top:455px;width:613px;height:22px;background:#f7f7f7;'></div>
<svg class='a' style='left:484px;top:496px;' width='21' height='21' viewBox='0 0 21 21'><rect x='1' y='1' width='19' height='19' fill='#fff' stroke='#555' stroke-width='2'/></svg>
<div class='t' style='left:514.5px;top:499.88px;font-size:17.2px;color:#8a8a8a;font-weight:400;'>16208</div>
<div class='t' style='left:582px;top:497.16px;font-size:20.4px;color:#8a8a8a;font-weight:700;'>HkThread_2</div>
<div class='a' style='left:919px;top:494px;width:613px;height:22px;background:#f7f7f7;'></div>
<svg class='a' style='left:484px;top:535px;' width='21' height='21' viewBox='0 0 21 21'><rect x='1' y='1' width='19' height='19' fill='#fff' stroke='#555' stroke-width='2'/></svg>
<div class='t' style='left:514.5px;top:538.88px;font-size:17.2px;color:#8a8a8a;font-weight:400;'>16188</div>
<div class='t' style='left:582px;top:536.16px;font-size:20.4px;color:#8a8a8a;font-weight:700;'>HkThread_3</div>
<div class='a' style='left:919px;top:533px;width:613px;height:22px;background:#f7f7f7;'></div>
<svg class='a' style='left:484px;top:574px;' width='21' height='21' viewBox='0 0 21 21'><rect x='1' y='1' width='19' height='19' fill='#fff' stroke='#555' stroke-width='2'/></svg>
<div class='t' style='left:514.5px;top:577.88px;font-size:17.2px;color:#8a8a8a;font-weight:400;'>24956</div>
<div class='t' style='left:582px;top:575.16px;font-size:20.4px;color:#8a8a8a;font-weight:700;'>HkThread_4</div>
<div class='a' style='left:919px;top:572px;width:613px;height:22px;background:#f7f7f7;'></div>
<svg class='a' style='left:484px;top:613px;' width='21' height='21' viewBox='0 0 21 21'><rect x='1' y='1' width='19' height='19' fill='#fff' stroke='#555' stroke-width='2'/></svg>
<div class='t' style='left:514.5px;top:616.88px;font-size:17.2px;color:#8a8a8a;font-weight:400;'>24316</div>
<div class='t' style='left:582px;top:614.16px;font-size:20.4px;color:#8a8a8a;font-weight:700;'>HkThread_5</div>
<div class='a' style='left:919px;top:611px;width:613px;height:22px;background:#f7f7f7;'></div>
<svg class='a' style='left:484px;top:652px;' width='21' height='21' viewBox='0 0 21 21'><rect x='1' y='1' width='19' height='19' fill='#fff' stroke='#555' stroke-width='2'/></svg>
<div class='t' style='left:514.5px;top:655.88px;font-size:17.2px;color:#8a8a8a;font-weight:400;'>23172</div>
<div class='t' style='left:582px;top:653.16px;font-size:20.4px;color:#8a8a8a;font-weight:700;'>HkThread_6</div>
<div class='a' style='left:919px;top:650px;width:613px;height:22px;background:#f7f7f7;'></div>
<svg class='a' style='left:484px;top:691px;' width='21' height='21' viewBox='0 0 21 21'><rect x='1' y='1' width='19' height='19' fill='#fff' stroke='#555' stroke-width='2'/></svg>
<div class='t' style='left:514.5px;top:694.88px;font-size:17.2px;color:#8a8a8a;font-weight:400;'>9296</div>
<div class='t' style='left:582px;top:692.16px;font-size:20.4px;color:#8a8a8a;font-weight:700;'>HkThread_7</div>
<div class='a' style='left:919px;top:689px;width:613px;height:22px;background:#f7f7f7;'></div>
<svg class='a' style='left:484px;top:730px;' width='21' height='21' viewBox='0 0 21 21'><rect x='1' y='1' width='19' height='19' fill='#fff' stroke='#555' stroke-width='2'/></svg>
<div class='t' style='left:514.5px;top:733.88px;font-size:17.2px;color:#8a8a8a;font-weight:400;'>1300</div>
<div class='t' style='left:582px;top:731.84px;font-size:19.6px;color:#8a8a8a;font-weight:400;'>CLR Worker</div>
<div class='a' style='left:919px;top:728px;width:613px;height:22px;background:#f7f7f7;'></div>
<div class='a' style='left:469px;top:758.5px;width:1071px;height:39px;background:#e3ecf9;box-sizing:border-box;border:1px solid #b9cdee;'></div>
<svg class='a' style='left:484px;top:769px;' width='21' height='21' viewBox='0 0 21 21'><rect x='1' y='1' width='19' height='19' fill='#fff' stroke='#555' stroke-width='2'/><path d='M4.5 10.5 L8.5 15.5 L16.5 4.5' fill='none' stroke='#000' stroke-width='2.6'/></svg>
<div class='t' style='left:514.5px;top:772.88px;font-size:17.2px;color:#111;font-weight:400;'>1860</div>
<div class='t' style='left:582px;top:770.84px;font-size:19.6px;color:#111;font-weight:400;'>CLR Worker</div>
<div class='t' style='left:844px;transform:translateX(-100%);top:770.38px;font-size:17.2px;color:#2f7bc4;font-weight:400;'>5,183 ms</div>
<svg class='a' style='left:919px;top:767px;' width='613' height='22' viewBox='0 0 613 22'><rect x='0' y='0' width='613' height='22' fill='url(#sts)'/><path d='M2 21 L2 10.0 L5 10.0 L5 10.2 L8 10.2 L8 10.3 L11 10.3 L11 10.4 L14 10.4 L14 10.0 L17 10.0 L17 10.1 L20 10.1 L20 10.2 L23 10.2 L23 10.3 L26 10.3 L26 9.9 L29 9.9 L29 9.6 L32 9.6 L32 9.6 L35 9.6 L35 9.8 L38 9.8 L38 10.0 L41 10.0 L41 10.0 L44 10.0 L44 10.0 L47 10.0 L47 10.1 L50 10.1 L50 10.0 L53 10.0 L53 10.1 L56 10.1 L56 9.7 L59 9.7 L59 9.5 L62 9.5 L62 9.6 L65 9.6 L65 9.8 L68 9.8 L68 9.5 L71 9.5 L71 9.8 L74 9.8 L74 9.9 L77 9.9 L77 10.2 L80 10.2 L80 10.1 L83 10.1 L83 10.0 L86 10.0 L86 9.9 L89 9.9 L89 10.1 L92 10.1 L92 10.0 L95 10.0 L95 10.2 L98 10.2 L98 10.2 L101 10.2 L101 10.3 L104 10.3 L104 10.2 L107 10.2 L107 10.3 L110 10.3 L110 10.4 L113 10.4 L113 10.3 L116 10.3 L116 10.3 L119 10.3 L119 10.0 L122 10.0 L122 9.9 L125 9.9 L125 9.7 L128 9.7 L128 9.7 L131 9.7 L131 9.6 L134 9.6 L134 9.4 L137 9.4 L137 9.7 L140 9.7 L140 9.8 L143 9.8 L143 9.5 L146 9.5 L146 9.9 L149 9.9 L149 9.7 L152 9.7 L152 9.7 L155 9.7 L155 10.0 L158 10.0 L158 9.7 L161 9.7 L161 9.5 L164 9.5 L164 9.6 L167 9.6 L167 9.5 L170 9.5 L170 9.4 L173 9.4 L173 9.8 L176 9.8 L176 9.8 L179 9.8 L179 9.8 L182 9.8 L182 9.6 L185 9.6 L185 9.5 L188 9.5 L188 9.4 L191 9.4 L191 9.5 L194 9.5 L194 9.4 L197 9.4 L197 9.5 L200 9.5 L200 9.5 L203 9.5 L203 9.8 L206 9.8 L206 10.1 L209 10.1 L209 10.2 L212 10.2 L212 10.1 L215 10.1 L215 10.3 L218 10.3 L218 9.9 L221 9.9 L221 9.8 L224 9.8 L224 9.7 L227 9.7 L227 9.7 L230 9.7 L230 9.6 L233 9.6 L233 9.7 L236 9.7 L236 10.1 L239 10.1 L239 9.8 L242 9.8 L242 9.6 L245 9.6 L245 9.7 L248 9.7 L248 9.7 L251 9.7 L251 9.7 L254 9.7 L254 10.0 L257 10.0 L257 9.8 L260 9.8 L260 10.0 L263 10.0 L263 10.2 L266 10.2 L266 10.2 L269 10.2 L269 9.9 L272 9.9 L272 10.0 L275 10.0 L275 9.8 L278 9.8 L278 9.5 L281 9.5 L281 9.6 L284 9.6 L284 9.8 L287 9.8 L287 9.8 L290 9.8 L290 9.7 L293 9.7 L293 9.6 L296 9.6 L296 9.6 L299 9.6 L299 9.6 L302 9.6 L302 10.0 L305 10.0 L305 10.1 L308 10.1 L308 10.2 L311 10.2 L311 9.9 L314 9.9 L314 10.0 L317 10.0 L317 9.9 L320 9.9 L320 10.2 L323 10.2 L323 10.3 L326 10.3 L326 10.2 L329 10.2 L329 10.0 L332 10.0 L332 9.8 L335 9.8 L335 9.7 L338 9.7 L338 9.9 L341 9.9 L341 9.8 L344 9.8 L344 9.9 L347 9.9 L347 9.9 L350 9.9 L350 10.1 L353 10.1 L353 9.7 L356 9.7 L356 10.0 L359 10.0 L359 9.6 L362 9.6 L362 9.4 L365 9.4 L365 9.9 L368 9.9 L368 9.9 L371 9.9 L371 9.7 L374 9.7 L374 9.4 L377 9.4 L377 9.6 L380 9.6 L380 9.8 L383 9.8 L383 10.0 L386 10.0 L386 9.7 L389 9.7 L389 9.9 L392 9.9 L392 9.8 L395 9.8 L395 10.0 L398 10.0 L398 9.9 L401 9.9 L401 9.6 L404 9.6 L404 9.9 L407 9.9 L407 9.7 L410 9.7 L410 9.7 L413 9.7 L413 9.5 L416 9.5 L416 9.5 L419 9.5 L419 9.8 L422 9.8 L422 9.6 L425 9.6 L425 9.7 L428 9.7 L428 10.0 L431 10.0 L431 10.3 L434 10.3 L434 10.1 L437 10.1 L437 10.0 L440 10.0 L440 10.1 L443 10.1 L443 10.2 L446 10.2 L446 10.1 L449 10.1 L449 10.1 L452 10.1 L452 9.8 L455 9.8 L455 10.1 L458 10.1 L458 9.8 L461 9.8 L461 9.6 L464 9.6 L464 9.9 L467 9.9 L467 9.6 L470 9.6 L470 9.6 L473 9.6 L473 9.4 L476 9.4 L476 9.7 L479 9.7 L479 9.8 L482 9.8 L482 9.9 L485 9.9 L485 9.6 L488 9.6 L488 9.6 L491 9.6 L491 9.8 L494 9.8 L494 9.8 L497 9.8 L497 10.0 L500 10.0 L500 10.2 L503 10.2 L503 10.3 L506 10.3 L506 9.9 L509 9.9 L509 10.0 L512 10.0 L512 9.7 L515 9.7 L515 9.9 L518 9.9 L518 10.0 L521 10.0 L521 9.9 L524 9.9 L524 10.1 L527 10.1 L527 10.1 L530 10.1 L530 9.7 L533 9.7 L533 9.5 L536 9.5 L536 9.4 L539 9.4 L539 9.5 L542 9.5 L542 9.4 L545 9.4 L545 9.3 L548 9.3 L548 9.5 L551 9.5 L551 9.5 L554 9.5 L554 9.9 L557 9.9 L557 9.7 L560 9.7 L560 9.8 L563 9.8 L563 9.6 L566 9.6 L566 9.6 L569 9.6 L569 9.8 L572 9.8 L572 10.1 L575 10.1 L575 9.7 L578 9.7 L578 10.0 L581 10.0 L581 9.9 L584 9.9 L584 10.0 L587 10.0 L587 10.0 L590 10.0 L590 9.8 L593 9.8 L593 9.5 L596 9.5 L596 9.8 L599 9.8 L599 9.7 L602 9.7 L602 9.9 L605 9.9 L605 9.8 L608 9.8 L608 9.9 L611 9.9 L611 21 Z' fill='url(#stsb)'/><rect x='1' y='1' width='611' height='20' fill='none' stroke='#000' stroke-width='2'/></svg>
<svg class='a' style='left:484px;top:808px;' width='21' height='21' viewBox='0 0 21 21'><rect x='1' y='1' width='19' height='19' fill='#fff' stroke='#555' stroke-width='2'/></svg>
<div class='t' style='left:514.5px;top:811.88px;font-size:17.2px;color:#111;font-weight:400;'>6860</div>
<div class='t' style='left:582px;top:809.84px;font-size:19.6px;color:#111;font-weight:400;'>CLR Worker</div>
<div class='t' style='left:844px;transform:translateX(-100%);top:809.38px;font-size:17.2px;color:#2f7bc4;font-weight:400;'>6,080 ms</div>
<svg class='a' style='left:919px;top:806px;' width='613' height='22' viewBox='0 0 613 22'><rect x='0' y='0' width='613' height='22' fill='url(#st)'/><path d='M2 21 L2 10.7 L5 10.7 L5 11.2 L8 11.2 L8 11.3 L11 11.3 L11 9.0 L14 9.0 L14 9.1 L17 9.1 L17 10.0 L20 10.0 L20 8.3 L23 8.3 L23 6.9 L26 6.9 L26 7.9 L29 7.9 L29 9.6 L32 9.6 L32 10.4 L35 10.4 L35 11.2 L38 11.2 L38 10.9 L41 10.9 L41 11.5 L44 11.5 L44 11.4 L47 11.4 L47 11.2 L50 11.2 L50 10.1 L53 10.1 L53 8.4 L56 8.4 L56 7.8 L59 7.8 L59 8.6 L62 8.6 L62 9.1 L65 9.1 L65 9.0 L68 9.0 L68 9.4 L71 9.4 L71 9.8 L74 9.8 L74 11.0 L77 11.0 L77 10.9 L80 10.9 L80 8.6 L83 8.6 L83 10.0 L86 10.0 L86 9.6 L89 9.6 L89 9.0 L92 9.0 L92 7.8 L95 7.8 L95 9.2 L98 9.2 L98 9.9 L101 9.9 L101 10.4 L104 10.4 L104 10.2 L107 10.2 L107 9.9 L110 9.9 L110 8.1 L113 8.1 L113 7.3 L116 7.3 L116 6.7 L119 6.7 L119 9.3 L122 9.3 L122 10.7 L125 10.7 L125 9.4 L128 9.4 L128 7.9 L131 7.9 L131 8.5 L134 8.5 L134 8.4 L137 8.4 L137 10.3 L140 10.3 L140 10.2 L143 10.2 L143 8.3 L146 8.3 L146 7.5 L149 7.5 L149 6.9 L152 6.9 L152 6.2 L155 6.2 L155 8.2 L158 8.2 L158 9.8 L161 9.8 L161 10.7 L164 10.7 L164 9.9 L167 9.9 L167 9.0 L170 9.0 L170 7.5 L173 7.5 L173 7.4 L176 7.4 L176 7.6 L179 7.6 L179 7.3 L182 7.3 L182 8.1 L185 8.1 L185 8.3 L188 8.3 L188 10.1 L191 10.1 L191 8.8 L194 8.8 L194 9.8 L197 9.8 L197 8.1 L200 8.1 L200 8.0 L203 8.0 L203 9.1 L206 9.1 L206 10.3 L209 10.3 L209 10.6 L212 10.6 L212 9.5 L215 9.5 L215 8.7 L218 8.7 L218 10.1 L221 10.1 L221 11.1 L224 11.1 L224 10.2 L227 10.2 L227 9.5 L230 9.5 L230 9.7 L233 9.7 L233 10.3 L236 10.3 L236 9.5 L239 9.5 L239 10.9 L242 10.9 L242 10.8 L245 10.8 L245 10.2 L248 10.2 L248 8.2 L251 8.2 L251 8.1 L254 8.1 L254 7.2 L257 7.2 L257 8.0 L260 8.0 L260 9.3 L263 9.3 L263 10.0 L266 10.0 L266 8.1 L269 8.1 L269 7.8 L272 7.8 L272 8.9 L275 8.9 L275 10.6 L278 10.6 L278 10.0 L281 10.0 L281 9.0 L284 9.0 L284 9.3 L287 9.3 L287 10.0 L290 10.0 L290 9.1 L293 9.1 L293 7.6 L296 7.6 L296 9.1 L299 9.1 L299 10.6 L302 10.6 L302 10.5 L305 10.5 L305 10.2 L308 10.2 L308 9.1 L311 9.1 L311 10.1 L314 10.1 L314 8.7 L317 8.7 L317 8.0 L320 8.0 L320 8.4 L323 8.4 L323 9.6 L326 9.6 L326 7.8 L329 7.8 L329 8.9 L332 8.9 L332 7.9 L335 7.9 L335 9.3 L338 9.3 L338 10.1 L341 10.1 L341 8.8 L344 8.8 L344 9.6 L347 9.6 L347 7.9 L350 7.9 L350 8.3 L353 8.3 L353 9.7 L356 9.7 L356 10.3 L359 10.3 L359 10.1 L362 10.1 L362 9.1 L365 9.1 L365 7.6 L368 7.6 L368 9.4 L371 9.4 L371 9.6 L374 9.6 L374 10.3 L377 10.3 L377 8.2 L380 8.2 L380 9.7 L383 9.7 L383 11.0 L386 11.0 L386 11.7 L389 11.7 L389 11.0 L392 11.0 L392 8.9 L395 8.9 L395 7.7 L398 7.7 L398 7.4 L401 7.4 L401 6.4 L404 6.4 L404 6.0 L407 6.0 L407 7.8 L410 7.8 L410 9.3 L413 9.3 L413 7.8 L416 7.8 L416 7.5 L419 7.5 L419 9.6 L422 9.6 L422 8.9 L425 8.9 L425 9.3 L428 9.3 L428 9.6 L431 9.6 L431 10.0 L434 10.0 L434 10.7 L437 10.7 L437 11.7 L440 11.7 L440 11.4 L443 11.4 L443 10.9 L446 10.9 L446 8.7 L449 8.7 L449 10.1 L452 10.1 L452 8.1 L455 8.1 L455 9.5 L458 9.5 L458 9.8 L461 9.8 L461 8.4 L464 8.4 L464 7.6 L467 7.6 L467 8.4 L470 8.4 L470 10.2 L473 10.2 L473 9.8 L476 9.8 L476 9.9 L479 9.9 L479 8.2 L482 8.2 L482 9.5 L485 9.5 L485 9.8 L488 9.8 L488 8.2 L491 8.2 L491 10.1 L494 10.1 L494 10.0 L497 10.0 L497 8.6 L500 8.6 L500 7.9 L503 7.9 L503 9.9 L506 9.9 L506 11.1 L509 11.1 L509 11.7 L512 11.7 L512 9.3 L515 9.3 L515 10.0 L518 10.0 L518 8.8 L521 8.8 L521 7.6 L524 7.6 L524 8.7 L527 8.7 L527 9.6 L530 9.6 L530 7.8 L533 7.8 L533 7.9 L536 7.9 L536 9.2 L539 9.2 L539 8.4 L542 8.4 L542 9.3 L545 9.3 L545 9.9 L548 9.9 L548 11.2 L551 11.2 L551 9.5 L554 9.5 L554 7.9 L557 7.9 L557 7.9 L560 7.9 L560 6.9 L563 6.9 L563 9.3 L566 9.3 L566 10.1 L569 10.1 L569 9.8 L572 9.8 L572 8.0 L575 8.0 L575 6.9 L578 6.9 L578 8.1 L581 8.1 L581 9.3 L584 9.3 L584 9.4 L587 9.4 L587 9.3 L590 9.3 L590 7.8 L593 7.8 L593 9.3 L596 9.3 L596 8.2 L599 8.2 L599 7.7 L602 7.7 L602 7.2 L605 7.2 L605 7.0 L608 7.0 L608 7.5 L611 7.5 L611 21 Z' fill='url(#stb)'/><rect x='0.5' y='0.5' width='612' height='21' fill='none' stroke='#999' stroke-width='1.5'/></svg>
<svg class='a' style='left:484px;top:847px;' width='21' height='21' viewBox='0 0 21 21'><rect x='1' y='1' width='19' height='19' fill='#fff' stroke='#555' stroke-width='2'/></svg>
<div class='t' style='left:514.5px;top:850.88px;font-size:17.2px;color:#111;font-weight:400;'>7772</div>
<div class='t' style='left:582px;top:848.84px;font-size:19.6px;color:#111;font-weight:400;'>CLR Worker</div>
<div class='t' style='left:844px;transform:translateX(-100%);top:848.38px;font-size:17.2px;color:#2f7bc4;font-weight:400;'>86 ms</div>
<svg class='a' style='left:919px;top:845px;' width='613' height='22' viewBox='0 0 613 22'><rect x='0' y='0' width='613' height='22' fill='url(#st)'/><rect x='0.5' y='0.5' width='612' height='21' fill='none' stroke='#999' stroke-width='1.5'/></svg>
<svg class='a' style='left:484px;top:886px;' width='21' height='21' viewBox='0 0 21 21'><rect x='1' y='1' width='19' height='19' fill='#fff' stroke='#555' stroke-width='2'/></svg>
<div class='t' style='left:514.5px;top:889.88px;font-size:17.2px;color:#111;font-weight:400;'>10968</div>
<div class='t' style='left:582px;top:887.84px;font-size:19.6px;color:#111;font-weight:400;'>CLR Worker</div>
<div class='t' style='left:844px;transform:translateX(-100%);top:887.38px;font-size:17.2px;color:#2f7bc4;font-weight:400;'>3,303 ms</div>
<svg class='a' style='left:919px;top:884px;' width='613' height='22' viewBox='0 0 613 22'><rect x='0' y='0' width='613' height='22' fill='url(#st)'/><path d='M2 21 L2 16.2 L5 16.2 L5 16.3 L8 16.3 L8 16.2 L11 16.2 L11 15.0 L14 15.0 L14 16.3 L17 16.3 L17 16.7 L20 16.7 L20 15.4 L23 15.4 L23 16.0 L26 16.0 L26 16.9 L29 16.9 L29 17.6 L32 17.6 L32 16.5 L35 16.5 L35 16.4 L38 16.4 L38 14.5 L41 14.5 L41 13.7 L44 13.7 L44 12.8 L47 12.8 L47 14.5 L50 14.5 L50 15.9 L53 15.9 L53 16.8 L56 16.8 L56 16.2 L59 16.2 L59 15.1 L62 15.1 L62 15.3 L65 15.3 L65 16.0 L68 16.0 L68 15.9 L71 15.9 L71 15.3 L74 15.3 L74 14.7 L77 14.7 L77 14.2 L80 14.2 L80 13.6 L83 13.6 L83 13.7 L86 13.7 L86 15.4 L89 15.4 L89 14.3 L92 14.3 L92 15.3 L95 15.3 L95 15.0 L98 15.0 L98 15.4 L101 15.4 L101 14.6 L104 14.6 L104 15.7 L107 15.7 L107 16.2 L110 16.2 L110 16.5 L113 16.5 L113 17.0 L116 17.0 L116 15.1 L119 15.1 L119 14.9 L122 14.9 L122 15.5 L125 15.5 L125 15.7 L128 15.7 L128 14.0 L131 14.0 L131 14.5 L134 14.5 L134 15.5 L137 15.5 L137 14.5 L140 14.5 L140 14.3 L143 14.3 L143 13.2 L146 13.2 L146 15.2 L149 15.2 L149 15.2 L152 15.2 L152 14.3 L155 14.3 L155 13.6 L158 13.6 L158 13.0 L161 13.0 L161 15.2 L164 15.2 L164 15.8 L167 15.8 L167 16.7 L170 16.7 L170 17.0 L173 17.0 L173 14.9 L176 14.9 L176 14.7 L179 14.7 L179 13.7 L182 13.7 L182 14.6 L185 14.6 L185 13.8 L188 13.8 L188 14.5 L191 14.5 L191 15.4 L194 15.4 L194 14.5 L197 14.5 L197 13.5 L200 13.5 L200 15.3 L203 15.3 L203 15.0 L206 15.0 L206 14.7 L209 14.7 L209 15.7 L212 15.7 L212 15.9 L215 15.9 L215 16.6 L218 16.6 L218 16.9 L221 16.9 L221 16.9 L224 16.9 L224 15.9 L227 15.9 L227 15.2 L230 15.2 L230 16.0 L233 16.0 L233 17.1 L236 17.1 L236 16.8 L239 16.8 L239 15.6 L242 15.6 L242 16.4 L245 16.4 L245 16.4 L248 16.4 L248 16.8 L251 16.8 L251 15.3 L254 15.3 L254 15.1 L257 15.1 L257 16.4 L260 16.4 L260 17.1 L263 17.1 L263 16.6 L266 16.6 L266 15.9 L269 15.9 L269 15.2 L272 15.2 L272 16.4 L275 16.4 L275 16.9 L278 16.9 L278 15.6 L281 15.6 L281 15.7 L284 15.7 L284 16.1 L287 16.1 L287 16.3 L290 16.3 L290 14.5 L293 14.5 L293 15.3 L296 15.3 L296 15.1 L299 15.1 L299 15.5 L302 15.5 L302 15.6 L305 15.6 L305 14.4 L308 14.4 L308 13.2 L311 13.2 L311 14.4 L314 14.4 L314 15.6 L317 15.6 L317 14.8 L320 14.8 L320 15.8 L323 15.8 L323 17.0 L326 17.0 L326 15.1 L329 15.1 L329 15.3 L332 15.3 L332 14.3 L335 14.3 L335 14.9 L338 14.9 L338 13.9 L341 13.9 L341 14.5 L344 14.5 L344 15.8 L347 15.8 L347 16.9 L350 16.9 L350 16.1 L353 16.1 L353 15.3 L356 15.3 L356 14.0 L359 14.0 L359 15.7 L362 15.7 L362 15.1 L365 15.1 L365 15.5 L368 15.5 L368 15.4 L371 15.4 L371 16.3 L374 16.3 L374 16.5 L377 16.5 L377 15.9 L380 15.9 L380 14.4 L383 14.4 L383 15.8 L386 15.8 L386 15.6 L389 15.6 L389 14.5 L392 14.5 L392 13.4 L395 13.4 L395 15.0 L398 15.0 L398 16.1 L401 16.1 L401 14.5 L404 14.5 L404 13.4 L407 13.4 L407 14.1 L410 14.1 L410 15.8 L413 15.8 L413 14.3 L416 14.3 L416 15.0 L419 15.0 L419 13.9 L422 13.9 L422 14.0 L425 14.0 L425 13.5 L428 13.5 L428 15.2 L431 15.2 L431 14.3 L434 14.3 L434 15.5 L437 15.5 L437 15.6 L440 15.6 L440 14.4 L443 14.4 L443 13.8 L446 13.8 L446 15.2 L449 15.2 L449 16.0 L452 16.0 L452 16.0 L455 16.0 L455 15.6 L458 15.6 L458 15.8 L461 15.8 L461 16.6 L464 16.6 L464 16.8 L467 16.8 L467 15.5 L470 15.5 L470 14.2 L473 14.2 L473 15.9 L476 15.9 L476 15.4 L479 15.4 L479 14.6 L482 14.6 L482 16.2 L485 16.2 L485 14.8 L488 14.8 L488 16.0 L491 16.0 L491 15.4 L494 15.4 L494 15.2 L497 15.2 L497 14.8 L500 14.8 L500 15.5 L503 15.5 L503 15.6 L506 15.6 L506 15.2 L509 15.2 L509 15.4 L512 15.4 L512 14.8 L515 14.8 L515 15.1 L518 15.1 L518 15.3 L521 15.3 L521 16.6 L524 16.6 L524 15.7 L527 15.7 L527 15.5 L530 15.5 L530 16.1 L533 16.1 L533 15.0 L536 15.0 L536 14.2 L539 14.2 L539 14.7 L542 14.7 L542 15.8 L545 15.8 L545 15.6 L548 15.6 L548 16.6 L551 16.6 L551 17.1 L554 17.1 L554 16.5 L557 16.5 L557 17.2 L560 17.2 L560 16.5 L563 16.5 L563 16.0 L566 16.0 L566 17.0 L569 17.0 L569 15.9 L572 15.9 L572 16.8 L575 16.8 L575 15.5 L578 15.5 L578 14.5 L581 14.5 L581 14.7 L584 14.7 L584 16.2 L587 16.2 L587 15.8 L590 15.8 L590 15.9 L593 15.9 L593 14.3 L596 14.3 L596 15.7 L599 15.7 L599 14.4 L602 14.4 L602 13.3 L605 13.3 L605 13.4 L608 13.4 L608 13.2 L611 13.2 L611 21 Z' fill='url(#stb)'/><rect x='0.5' y='0.5' width='612' height='21' fill='none' stroke='#999' stroke-width='1.5'/></svg>
<svg class='a' style='left:484px;top:925px;' width='21' height='21' viewBox='0 0 21 21'><rect x='1' y='1' width='19' height='19' fill='#fff' stroke='#555' stroke-width='2'/></svg>
<div class='t' style='left:514.5px;top:928.88px;font-size:17.2px;color:#111;font-weight:400;'>12040</div>
<div class='t' style='left:582px;top:926.84px;font-size:19.6px;color:#111;font-weight:400;'>CLR Worker</div>
<div class='t' style='left:844px;transform:translateX(-100%);top:926.38px;font-size:17.2px;color:#2f7bc4;font-weight:400;'>3,343 ms</div>
<svg class='a' style='left:919px;top:923px;' width='613' height='22' viewBox='0 0 613 22'><rect x='0' y='0' width='613' height='22' fill='url(#st)'/><path d='M2 21 L2 16.6 L5 16.6 L5 14.6 L8 14.6 L8 14.8 L11 14.8 L11 13.6 L14 13.6 L14 13.0 L17 13.0 L17 14.9 L20 14.9 L20 14.1 L23 14.1 L23 13.3 L26 13.3 L26 15.3 L29 15.3 L29 15.7 L32 15.7 L32 14.7 L35 14.7 L35 15.9 L38 15.9 L38 14.4 L41 14.4 L41 15.4 L44 15.4 L44 14.4 L47 14.4 L47 15.7 L50 15.7 L50 15.5 L53 15.5 L53 14.1 L56 14.1 L56 15.4 L59 15.4 L59 16.0 L62 16.0 L62 15.6 L65 15.6 L65 16.0 L68 16.0 L68 17.0 L71 17.0 L71 17.2 L74 17.2 L74 17.4 L77 17.4 L77 15.2 L80 15.2 L80 14.7 L83 14.7 L83 13.7 L86 13.7 L86 15.3 L89 15.3 L89 14.4 L92 14.4 L92 15.8 L95 15.8 L95 15.5 L98 15.5 L98 14.9 L101 14.9 L101 15.4 L104 15.4 L104 14.2 L107 14.2 L107 14.4 L110 14.4 L110 14.5 L113 14.5 L113 13.7 L116 13.7 L116 15.4 L119 15.4 L119 13.9 L122 13.9 L122 14.0 L125 14.0 L125 14.8 L128 14.8 L128 14.1 L131 14.1 L131 15.2 L134 15.2 L134 13.7 L137 13.7 L137 14.1 L140 14.1 L140 14.9 L143 14.9 L143 14.2 L146 14.2 L146 14.8 L149 14.8 L149 15.9 L152 15.9 L152 14.9 L155 14.9 L155 16.3 L158 16.3 L158 14.9 L161 14.9 L161 15.7 L164 15.7 L164 15.1 L167 15.1 L167 13.7 L170 13.7 L170 14.0 L173 14.0 L173 14.0 L176 14.0 L176 15.0 L179 15.0 L179 16.5 L182 16.5 L182 17.3 L185 17.3 L185 17.5 L188 17.5 L188 16.2 L191 16.2 L191 16.0 L194 16.0 L194 15.6 L197 15.6 L197 14.3 L200 14.3 L200 15.7 L203 15.7 L203 16.3 L206 16.3 L206 15.4 L209 15.4 L209 16.7 L212 16.7 L212 17.5 L215 17.5 L215 17.0 L218 17.0 L218 17.4 L221 17.4 L221 16.9 L224 16.9 L224 17.0 L227 17.0 L227 16.0 L230 16.0 L230 15.4 L233 15.4 L233 16.2 L236 16.2 L236 15.4 L239 15.4 L239 15.4 L242 15.4 L242 16.4 L245 16.4 L245 14.6 L248 14.6 L248 15.6 L251 15.6 L251 16.4 L254 16.4 L254 17.1 L257 17.1 L257 15.9 L260 15.9 L260 14.5 L263 14.5 L263 14.0 L266 14.0 L266 14.7 L269 14.7 L269 15.6 L272 15.6 L272 16.8 L275 16.8 L275 15.7 L278 15.7 L278 15.3 L281 15.3 L281 15.7 L284 15.7 L284 15.1 L287 15.1 L287 15.3 L290 15.3 L290 13.9 L293 13.9 L293 13.8 L296 13.8 L296 15.0 L299 15.0 L299 13.9 L302 13.9 L302 15.7 L305 15.7 L305 15.4 L308 15.4 L308 15.6 L311 15.6 L311 16.2 L314 16.2 L314 17.1 L317 17.1 L317 15.5 L320 15.5 L320 16.8 L323 16.8 L323 16.0 L326 16.0 L326 14.4 L329 14.4 L329 15.7 L332 15.7 L332 16.4 L335 16.4 L335 15.6 L338 15.6 L338 15.4 L341 15.4 L341 14.9 L344 14.9 L344 14.1 L347 14.1 L347 15.5 L350 15.5 L350 15.9 L353 15.9 L353 16.2 L356 16.2 L356 17.1 L359 17.1 L359 15.2 L362 15.2 L362 14.3 L365 14.3 L365 14.0 L368 14.0 L368 15.9 L371 15.9 L371 14.6 L374 14.6 L374 14.1 L377 14.1 L377 14.6 L380 14.6 L380 14.1 L383 14.1 L383 14.7 L386 14.7 L386 15.7 L389 15.7 L389 16.6 L392 16.6 L392 16.8 L395 16.8 L395 17.5 L398 17.5 L398 17.0 L401 17.0 L401 15.6 L404 15.6 L404 14.8 L407 14.8 L407 14.0 L410 14.0 L410 13.8 L413 13.8 L413 15.0 L416 15.0 L416 14.9 L419 14.9 L419 15.2 L422 15.2 L422 14.3 L425 14.3 L425 14.6 L428 14.6 L428 15.5 L431 15.5 L431 15.0 L434 15.0 L434 13.7 L437 13.7 L437 15.1 L440 15.1 L440 14.0 L443 14.0 L443 15.9 L446 15.9 L446 16.3 L449 16.3 L449 16.6 L452 16.6 L452 15.3 L455 15.3 L455 14.0 L458 14.0 L458 13.7 L461 13.7 L461 14.8 L464 14.8 L464 13.8 L467 13.8 L467 14.9 L470 14.9 L470 15.7 L473 15.7 L473 14.3 L476 14.3 L476 14.3 L479 14.3 L479 14.1 L482 14.1 L482 14.0 L485 14.0 L485 13.1 L488 13.1 L488 14.0 L491 14.0 L491 13.5 L494 13.5 L494 13.6 L497 13.6 L497 13.2 L500 13.2 L500 14.1 L503 14.1 L503 13.9 L506 13.9 L506 14.2 L509 14.2 L509 15.1 L512 15.1 L512 16.0 L515 16.0 L515 15.3 L518 15.3 L518 16.5 L521 16.5 L521 14.8 L524 14.8 L524 16.0 L527 16.0 L527 17.0 L530 17.0 L530 17.4 L533 17.4 L533 15.3 L536 15.3 L536 15.7 L539 15.7 L539 16.5 L542 16.5 L542 17.3 L545 17.3 L545 17.8 L548 17.8 L548 16.2 L551 16.2 L551 15.4 L554 15.4 L554 14.7 L557 14.7 L557 14.2 L560 14.2 L560 15.9 L563 15.9 L563 15.3 L566 15.3 L566 15.6 L569 15.6 L569 14.5 L572 14.5 L572 13.9 L575 13.9 L575 13.2 L578 13.2 L578 15.3 L581 15.3 L581 14.2 L584 14.2 L584 13.3 L587 13.3 L587 12.8 L590 12.8 L590 14.9 L593 14.9 L593 15.8 L596 15.8 L596 16.7 L599 16.7 L599 17.4 L602 17.4 L602 15.5 L605 15.5 L605 14.5 L608 14.5 L608 14.4 L611 14.4 L611 21 Z' fill='url(#stb)'/><rect x='0.5' y='0.5' width='612' height='21' fill='none' stroke='#999' stroke-width='1.5'/></svg>
<svg class='a' style='left:484px;top:964px;' width='21' height='21' viewBox='0 0 21 21'><rect x='1' y='1' width='19' height='19' fill='#fff' stroke='#555' stroke-width='2'/></svg>
<div class='t' style='left:514.5px;top:967.88px;font-size:17.2px;color:#111;font-weight:400;'>12708</div>
<div class='t' style='left:582px;top:965.84px;font-size:19.6px;color:#111;font-weight:400;'>CLR Worker</div>
<div class='t' style='left:844px;transform:translateX(-100%);top:965.38px;font-size:17.2px;color:#2f7bc4;font-weight:400;'>3.5 ms</div>
<svg class='a' style='left:919px;top:962px;' width='613' height='22' viewBox='0 0 613 22'><rect x='0' y='0' width='613' height='22' fill='url(#st)'/><rect x='0.5' y='0.5' width='612' height='21' fill='none' stroke='#999' stroke-width='1.5'/></svg>
<svg class='a' style='left:484px;top:1003px;' width='21' height='21' viewBox='0 0 21 21'><rect x='1' y='1' width='19' height='19' fill='#fff' stroke='#555' stroke-width='2'/></svg>
<div class='t' style='left:514.5px;top:1006.88px;font-size:17.2px;color:#111;font-weight:400;'>13376</div>
<div class='t' style='left:582px;top:1004.84px;font-size:19.6px;color:#111;font-weight:400;'>CLR Worker</div>
<div class='t' style='left:844px;transform:translateX(-100%);top:1004.38px;font-size:17.2px;color:#2f7bc4;font-weight:400;'>55 ms</div>
<svg class='a' style='left:919px;top:1001px;' width='613' height='22' viewBox='0 0 613 22'><rect x='0' y='0' width='613' height='22' fill='url(#st)'/><rect x='0.5' y='0.5' width='612' height='21' fill='none' stroke='#999' stroke-width='1.5'/></svg>
<svg class='a' style='left:484px;top:1042px;' width='21' height='21' viewBox='0 0 21 21'><rect x='1' y='1' width='19' height='19' fill='#fff' stroke='#555' stroke-width='2'/></svg>
<div class='t' style='left:514.5px;top:1045.88px;font-size:17.2px;color:#111;font-weight:400;'>14168</div>
<div class='t' style='left:582px;top:1043.84px;font-size:19.6px;color:#111;font-weight:400;'>CLR Worker</div>
<div class='t' style='left:844px;transform:translateX(-100%);top:1043.38px;font-size:17.2px;color:#2f7bc4;font-weight:400;'>4.4 ms</div>
<div class='a' style='left:919px;top:1040px;width:613px;height:22px;background:#f7f7f7;'></div>
<div class='a' style='left:928px;top:1040px;width:5px;height:22px;background:#e0e0e0;box-sizing:border-box;border:1px solid #9a9a9a;'></div>
<div class='a' style='left:989px;top:1040px;width:5px;height:22px;background:#e0e0e0;box-sizing:border-box;border:1px solid #9a9a9a;'></div>
<div class='a' style='left:1050px;top:1040px;width:5px;height:22px;background:#e0e0e0;box-sizing:border-box;border:1px solid #9a9a9a;'></div>
<div class='a' style='left:1111px;top:1040px;width:5px;height:22px;background:#e0e0e0;box-sizing:border-box;border:1px solid #9a9a9a;'></div>
<div class='a' style='left:1173px;top:1040px;width:5px;height:22px;background:#e0e0e0;box-sizing:border-box;border:1px solid #9a9a9a;'></div>
<div class='a' style='left:1234px;top:1040px;width:5px;height:22px;background:#e0e0e0;box-sizing:border-box;border:1px solid #9a9a9a;'></div>
<div class='a' style='left:1295px;top:1040px;width:5px;height:22px;background:#e0e0e0;box-sizing:border-box;border:1px solid #9a9a9a;'></div>
<div class='a' style='left:1356px;top:1040px;width:5px;height:22px;background:#e0e0e0;box-sizing:border-box;border:1px solid #9a9a9a;'></div>
<div class='a' style='left:1417px;top:1040px;width:5px;height:22px;background:#e0e0e0;box-sizing:border-box;border:1px solid #9a9a9a;'></div>
<div class='a' style='left:1478px;top:1040px;width:5px;height:22px;background:#e0e0e0;box-sizing:border-box;border:1px solid #9a9a9a;'></div>
<svg class='a' style='left:484px;top:1081px;' width='21' height='21' viewBox='0 0 21 21'><rect x='1' y='1' width='19' height='19' fill='#fff' stroke='#555' stroke-width='2'/></svg>
<div class='t' style='left:514.5px;top:1084.88px;font-size:17.2px;color:#111;font-weight:400;'>15068</div>
<div class='t' style='left:582px;top:1082.84px;font-size:19.6px;color:#111;font-weight:400;'>CLR Worker</div>
<div class='t' style='left:844px;transform:translateX(-100%);top:1082.38px;font-size:17.2px;color:#2f7bc4;font-weight:400;'>0.2 ms</div>
<div class='a' style='left:919px;top:1079px;width:613px;height:22px;background:#f7f7f7;'></div>
<div class='a' style='left:975px;top:1079px;width:5px;height:22px;background:#e0e0e0;box-sizing:border-box;border:1px solid #9a9a9a;'></div>
<div class='a' style='left:999px;top:1079px;width:5px;height:22px;background:#e0e0e0;box-sizing:border-box;border:1px solid #9a9a9a;'></div>
<div class='a' style='left:1402px;top:1079px;width:5px;height:22px;background:#e0e0e0;box-sizing:border-box;border:1px solid #9a9a9a;'></div>
<svg class='a' style='left:484px;top:1120px;' width='21' height='21' viewBox='0 0 21 21'><rect x='1' y='1' width='19' height='19' fill='#fff' stroke='#555' stroke-width='2'/></svg>
<div class='t' style='left:514.5px;top:1123.88px;font-size:17.2px;color:#111;font-weight:400;'>18240</div>
<div class='t' style='left:582px;top:1121.84px;font-size:19.6px;color:#111;font-weight:400;'>CLR Worker</div>
<div class='t' style='left:844px;transform:translateX(-100%);top:1121.38px;font-size:17.2px;color:#2f7bc4;font-weight:400;'>157 ms</div>
<svg class='a' style='left:919px;top:1118px;' width='613' height='22' viewBox='0 0 613 22'><rect x='0' y='0' width='613' height='22' fill='url(#st)'/><rect x='0.5' y='0.5' width='612' height='21' fill='none' stroke='#999' stroke-width='1.5'/></svg>
<svg class='a' style='left:484px;top:1159px;' width='21' height='21' viewBox='0 0 21 21'><rect x='1' y='1' width='19' height='19' fill='#fff' stroke='#555' stroke-width='2'/></svg>
<div class='t' style='left:514.5px;top:1162.88px;font-size:17.2px;color:#111;font-weight:400;'>21460</div>
<div class='t' style='left:582px;top:1160.84px;font-size:19.6px;color:#111;font-weight:400;'>CLR Worker</div>
<div class='t' style='left:844px;transform:translateX(-100%);top:1160.38px;font-size:17.2px;color:#2f7bc4;font-weight:400;'>3,389 ms</div>
<svg class='a' style='left:919px;top:1157px;' width='613' height='22' viewBox='0 0 613 22'><rect x='0' y='0' width='613' height='22' fill='url(#st)'/><path d='M2 21 L2 15.5 L5 15.5 L5 15.3 L8 15.3 L8 16.1 L11 16.1 L11 17.0 L14 17.0 L14 17.6 L17 17.6 L17 16.2 L20 16.2 L20 16.8 L23 16.8 L23 16.9 L26 16.9 L26 16.7 L29 16.7 L29 17.6 L32 17.6 L32 17.5 L35 17.5 L35 17.4 L38 17.4 L38 16.2 L41 16.2 L41 16.4 L44 16.4 L44 16.7 L47 16.7 L47 15.2 L50 15.2 L50 15.5 L53 15.5 L53 14.7 L56 14.7 L56 14.9 L59 14.9 L59 16.5 L62 16.5 L62 16.4 L65 16.4 L65 16.4 L68 16.4 L68 15.5 L71 15.5 L71 16.0 L74 16.0 L74 15.5 L77 15.5 L77 15.5 L80 15.5 L80 16.4 L83 16.4 L83 15.3 L86 15.3 L86 16.5 L89 16.5 L89 15.5 L92 15.5 L92 16.5 L95 16.5 L95 17.5 L98 17.5 L98 17.6 L101 17.6 L101 16.2 L104 16.2 L104 14.9 L107 14.9 L107 16.5 L110 16.5 L110 16.3 L113 16.3 L113 16.2 L116 16.2 L116 15.3 L119 15.3 L119 16.3 L122 16.3 L122 16.2 L125 16.2 L125 16.4 L128 16.4 L128 15.4 L131 15.4 L131 16.2 L134 16.2 L134 15.0 L137 15.0 L137 15.9 L140 15.9 L140 16.6 L143 16.6 L143 15.8 L146 15.8 L146 15.8 L149 15.8 L149 16.8 L152 16.8 L152 16.1 L155 16.1 L155 17.1 L158 17.1 L158 15.9 L161 15.9 L161 15.4 L164 15.4 L164 14.9 L167 14.9 L167 15.0 L170 15.0 L170 15.7 L173 15.7 L173 16.0 L176 16.0 L176 16.2 L179 16.2 L179 15.1 L182 15.1 L182 16.5 L185 16.5 L185 15.3 L188 15.3 L188 16.7 L191 16.7 L191 17.1 L194 17.1 L194 17.2 L197 17.2 L197 15.7 L200 15.7 L200 15.8 L203 15.8 L203 16.1 L206 16.1 L206 15.1 L209 15.1 L209 16.1 L212 16.1 L212 16.1 L215 16.1 L215 15.9 L218 15.9 L218 15.3 L221 15.3 L221 14.9 L224 14.9 L224 14.9 L227 14.9 L227 15.7 L230 15.7 L230 16.2 L233 16.2 L233 16.9 L236 16.9 L236 15.7 L239 15.7 L239 15.3 L242 15.3 L242 15.0 L245 15.0 L245 16.1 L248 16.1 L248 16.2 L251 16.2 L251 15.4 L254 15.4 L254 15.4 L257 15.4 L257 16.5 L260 16.5 L260 16.4 L263 16.4 L263 15.2 L266 15.2 L266 16.1 L269 16.1 L269 16.8 L272 16.8 L272 16.9 L275 16.9 L275 16.0 L278 16.0 L278 15.1 L281 15.1 L281 16.3 L284 16.3 L284 17.0 L287 17.0 L287 17.2 L290 17.2 L290 17.1 L293 17.1 L293 16.5 L296 16.5 L296 17.1 L299 17.1 L299 17.1 L302 17.1 L302 17.4 L305 17.4 L305 15.6 L308 15.6 L308 15.1 L311 15.1 L311 16.4 L314 16.4 L314 15.1 L317 15.1 L317 16.4 L320 16.4 L320 16.5 L323 16.5 L323 15.0 L326 15.0 L326 14.6 L329 14.6 L329 14.5 L332 14.5 L332 15.2 L335 15.2 L335 16.3 L338 16.3 L338 15.8 L341 15.8 L341 16.8 L344 16.8 L344 17.2 L347 17.2 L347 16.9 L350 16.9 L350 17.7 L353 17.7 L353 17.2 L356 17.2 L356 15.9 L359 15.9 L359 15.4 L362 15.4 L362 15.6 L365 15.6 L365 15.4 L368 15.4 L368 15.7 L371 15.7 L371 16.7 L374 16.7 L374 16.1 L377 16.1 L377 16.2 L380 16.2 L380 15.5 L383 15.5 L383 14.6 L386 14.6 L386 15.3 L389 15.3 L389 15.4 L392 15.4 L392 14.9 L395 14.9 L395 15.5 L398 15.5 L398 16.3 L401 16.3 L401 15.6 L404 15.6 L404 14.8 L407 14.8 L407 14.5 L410 14.5 L410 14.6 L413 14.6 L413 14.2 L416 14.2 L416 14.4 L419 14.4 L419 14.7 L422 14.7 L422 15.3 L425 15.3 L425 16.0 L428 16.0 L428 15.6 L431 15.6 L431 16.7 L434 16.7 L434 16.6 L437 16.6 L437 15.6 L440 15.6 L440 15.2 L443 15.2 L443 15.1 L446 15.1 L446 16.1 L449 16.1 L449 16.2 L452 16.2 L452 16.2 L455 16.2 L455 15.8 L458 15.8 L458 16.0 L461 16.0 L461 15.5 L464 15.5 L464 14.6 L467 14.6 L467 15.9 L470 15.9 L470 15.5 L473 15.5 L473 15.0 L476 15.0 L476 15.6 L479 15.6 L479 15.7 L482 15.7 L482 14.6 L485 14.6 L485 16.3 L488 16.3 L488 16.0 L491 16.0 L491 16.8 L494 16.8 L494 15.7 L497 15.7 L497 14.7 L500 14.7 L500 15.1 L503 15.1 L503 16.4 L506 16.4 L506 16.0 L509 16.0 L509 15.9 L512 15.9 L512 15.3 L515 15.3 L515 15.5 L518 15.5 L518 15.3 L521 15.3 L521 14.7 L524 14.7 L524 15.1 L527 15.1 L527 15.7 L530 15.7 L530 14.6 L533 14.6 L533 15.9 L536 15.9 L536 15.4 L539 15.4 L539 15.9 L542 15.9 L542 15.2 L545 15.2 L545 16.4 L548 16.4 L548 15.0 L551 15.0 L551 15.7 L554 15.7 L554 16.9 L557 16.9 L557 17.0 L560 17.0 L560 16.8 L563 16.8 L563 17.7 L566 17.7 L566 17.2 L569 17.2 L569 16.8 L572 16.8 L572 16.0 L575 16.0 L575 16.3 L578 16.3 L578 16.7 L581 16.7 L581 17.1 L584 17.1 L584 16.0 L587 16.0 L587 14.8 L590 14.8 L590 15.2 L593 15.2 L593 16.2 L596 16.2 L596 15.3 L599 15.3 L599 15.8 L602 15.8 L602 16.6 L605 16.6 L605 17.2 L608 17.2 L608 16.0 L611 16.0 L611 21 Z' fill='url(#stb)'/><rect x='0.5' y='0.5' width='612' height='21' fill='none' stroke='#999' stroke-width='1.5'/></svg>
<svg class='a' style='left:484px;top:1198px;' width='21' height='21' viewBox='0 0 21 21'><rect x='1' y='1' width='19' height='19' fill='#fff' stroke='#555' stroke-width='2'/></svg>
<div class='t' style='left:514.5px;top:1201.88px;font-size:17.2px;color:#111;font-weight:400;'>25400</div>
<div class='t' style='left:582px;top:1199.84px;font-size:19.6px;color:#111;font-weight:400;'>CLR Worker</div>
<div class='t' style='left:844px;transform:translateX(-100%);top:1199.38px;font-size:17.2px;color:#2f7bc4;font-weight:400;'>3,458 ms</div>
<svg class='a' style='left:919px;top:1196px;' width='613' height='22' viewBox='0 0 613 22'><rect x='0' y='0' width='613' height='22' fill='url(#st)'/><path d='M2 21 L2 15.5 L5 15.5 L5 15.3 L8 15.3 L8 15.6 L11 15.6 L11 15.6 L14 15.6 L14 16.4 L17 16.4 L17 15.0 L20 15.0 L20 15.7 L23 15.7 L23 15.4 L26 15.4 L26 14.8 L29 14.8 L29 14.5 L32 14.5 L32 15.1 L35 15.1 L35 15.9 L38 15.9 L38 15.8 L41 15.8 L41 16.8 L44 16.8 L44 15.6 L47 15.6 L47 16.1 L50 16.1 L50 15.1 L53 15.1 L53 16.0 L56 16.0 L56 16.3 L59 16.3 L59 16.7 L62 16.7 L62 16.6 L65 16.6 L65 17.1 L68 17.1 L68 17.8 L71 17.8 L71 16.5 L74 16.5 L74 16.8 L77 16.8 L77 17.1 L80 17.1 L80 17.1 L83 17.1 L83 16.7 L86 16.7 L86 16.5 L89 16.5 L89 15.9 L92 15.9 L92 15.5 L95 15.5 L95 16.0 L98 16.0 L98 14.9 L101 14.9 L101 14.4 L104 14.4 L104 16.1 L107 16.1 L107 15.2 L110 15.2 L110 14.5 L113 14.5 L113 14.3 L116 14.3 L116 15.8 L119 15.8 L119 15.0 L122 15.0 L122 15.0 L125 15.0 L125 16.6 L128 16.6 L128 17.5 L131 17.5 L131 15.7 L134 15.7 L134 15.4 L137 15.4 L137 16.2 L140 16.2 L140 17.1 L143 17.1 L143 17.5 L146 17.5 L146 17.5 L149 17.5 L149 16.2 L152 16.2 L152 16.4 L155 16.4 L155 17.1 L158 17.1 L158 15.6 L161 15.6 L161 15.0 L164 15.0 L164 16.2 L167 16.2 L167 15.1 L170 15.1 L170 15.1 L173 15.1 L173 14.7 L176 14.7 L176 14.8 L179 14.8 L179 14.2 L182 14.2 L182 14.2 L185 14.2 L185 14.0 L188 14.0 L188 15.5 L191 15.5 L191 15.2 L194 15.2 L194 15.4 L197 15.4 L197 15.0 L200 15.0 L200 15.5 L203 15.5 L203 14.7 L206 14.7 L206 15.0 L209 15.0 L209 16.0 L212 16.0 L212 16.6 L215 16.6 L215 17.2 L218 17.2 L218 16.7 L221 16.7 L221 17.5 L224 17.5 L224 16.9 L227 16.9 L227 17.4 L230 17.4 L230 16.8 L233 16.8 L233 16.4 L236 16.4 L236 16.1 L239 16.1 L239 15.1 L242 15.1 L242 16.7 L245 16.7 L245 15.5 L248 15.5 L248 15.7 L251 15.7 L251 15.6 L254 15.6 L254 15.3 L257 15.3 L257 14.7 L260 14.7 L260 15.5 L263 15.5 L263 15.8 L266 15.8 L266 14.7 L269 14.7 L269 16.2 L272 16.2 L272 15.8 L275 15.8 L275 15.5 L278 15.5 L278 16.8 L281 16.8 L281 16.2 L284 16.2 L284 15.6 L287 15.6 L287 14.6 L290 14.6 L290 15.6 L293 15.6 L293 14.5 L296 14.5 L296 15.0 L299 15.0 L299 15.4 L302 15.4 L302 14.6 L305 14.6 L305 16.3 L308 16.3 L308 15.6 L311 15.6 L311 15.4 L314 15.4 L314 16.0 L317 16.0 L317 15.0 L320 15.0 L320 15.7 L323 15.7 L323 15.8 L326 15.8 L326 15.8 L329 15.8 L329 15.2 L332 15.2 L332 16.2 L335 16.2 L335 16.2 L338 16.2 L338 16.3 L341 16.3 L341 16.0 L344 16.0 L344 15.1 L347 15.1 L347 15.9 L350 15.9 L350 15.1 L353 15.1 L353 15.7 L356 15.7 L356 15.7 L359 15.7 L359 16.4 L362 16.4 L362 16.2 L365 16.2 L365 14.9 L368 14.9 L368 14.9 L371 14.9 L371 14.6 L374 14.6 L374 15.5 L377 15.5 L377 16.1 L380 16.1 L380 16.5 L383 16.5 L383 16.0 L386 16.0 L386 15.6 L389 15.6 L389 15.0 L392 15.0 L392 16.5 L395 16.5 L395 15.7 L398 15.7 L398 14.8 L401 14.8 L401 15.1 L404 15.1 L404 16.6 L407 16.6 L407 16.8 L410 16.8 L410 17.7 L413 17.7 L413 17.7 L416 17.7 L416 15.9 L419 15.9 L419 15.6 L422 15.6 L422 15.3 L425 15.3 L425 14.8 L428 14.8 L428 14.2 L431 14.2 L431 14.6 L434 14.6 L434 14.8 L437 14.8 L437 14.9 L440 14.9 L440 14.8 L443 14.8 L443 15.0 L446 15.0 L446 14.9 L449 14.9 L449 16.0 L452 16.0 L452 15.5 L455 15.5 L455 15.8 L458 15.8 L458 15.2 L461 15.2 L461 16.4 L464 16.4 L464 17.0 L467 17.0 L467 17.7 L470 17.7 L470 16.3 L473 16.3 L473 15.1 L476 15.1 L476 15.0 L479 15.0 L479 15.7 L482 15.7 L482 15.0 L485 15.0 L485 14.6 L488 14.6 L488 15.0 L491 15.0 L491 15.9 L494 15.9 L494 16.4 L497 16.4 L497 16.4 L500 16.4 L500 16.6 L503 16.6 L503 16.5 L506 16.5 L506 15.9 L509 15.9 L509 14.8 L512 14.8 L512 16.4 L515 16.4 L515 16.0 L518 16.0 L518 17.1 L521 17.1 L521 17.6 L524 17.6 L524 16.1 L527 16.1 L527 15.8 L530 15.8 L530 14.8 L533 14.8 L533 15.4 L536 15.4 L536 16.8 L539 16.8 L539 16.7 L542 16.7 L542 16.1 L545 16.1 L545 14.9 L548 14.9 L548 14.1 L551 14.1 L551 14.9 L554 14.9 L554 15.5 L557 15.5 L557 16.6 L560 16.6 L560 16.0 L563 16.0 L563 16.7 L566 16.7 L566 17.2 L569 17.2 L569 17.9 L572 17.9 L572 18.3 L575 18.3 L575 16.9 L578 16.9 L578 17.4 L581 17.4 L581 15.6 L584 15.6 L584 16.8 L587 16.8 L587 15.5 L590 15.5 L590 16.6 L593 16.6 L593 17.5 L596 17.5 L596 16.3 L599 16.3 L599 16.8 L602 16.8 L602 15.8 L605 15.8 L605 16.6 L608 16.6 L608 17.5 L611 17.5 L611 21 Z' fill='url(#stb)'/><rect x='0.5' y='0.5' width='612' height='21' fill='none' stroke='#999' stroke-width='1.5'/></svg>
<svg class='a' style='left:484px;top:1237px;' width='21' height='21' viewBox='0 0 21 21'><rect x='1' y='1' width='19' height='19' fill='#fff' stroke='#555' stroke-width='2'/></svg>
<div class='t' style='left:514.5px;top:1240.88px;font-size:17.2px;color:#111;font-weight:400;'>26724</div>
<div class='t' style='left:582px;top:1238.84px;font-size:19.6px;color:#111;font-weight:400;'>CLR Worker</div>
<div class='t' style='left:844px;transform:translateX(-100%);top:1238.38px;font-size:17.2px;color:#2f7bc4;font-weight:400;'>60 ms</div>
<svg class='a' style='left:919px;top:1235px;' width='613' height='22' viewBox='0 0 613 22'><rect x='0' y='0' width='613' height='22' fill='url(#st)'/><rect x='0.5' y='0.5' width='612' height='21' fill='none' stroke='#999' stroke-width='1.5'/></svg>
<svg class='a' style='left:484px;top:1276px;' width='21' height='21' viewBox='0 0 21 21'><rect x='1' y='1' width='19' height='19' fill='#fff' stroke='#555' stroke-width='2'/></svg>
<div class='t' style='left:514.5px;top:1279.88px;font-size:17.2px;color:#8a8a8a;font-weight:400;'>10636</div>
<div class='t' style='left:582px;top:1277.84px;font-size:19.6px;color:#8a8a8a;font-weight:400;'>Finalizer</div>
<div class='a' style='left:919px;top:1274px;width:613px;height:22px;background:#f7f7f7;'></div>
<div class='a' style='left:484px;top:2006px;width:154px;height:30px;background:#ffffff;box-sizing:border-box;border:1px solid #a8a8b8;'></div>
<div class='t' style='left:493px;top:2014.04px;font-size:17.6px;color:#111;font-weight:400;'>Visible Threads</div>
<svg class='a' style='left:620px;top:2017px;' width='10' height='6' viewBox='0 0 10 6'><polygon points='0,0 9,0 4.5,5' fill='#222'/></svg>
<div class='a' style='left:1551px;top:83px;width:1318px;height:1124px;background:#f0f0f0;box-sizing:border-box;border:1px solid #cfcfcf;'></div>
<div class='a' style='left:1552px;top:84px;width:1316px;height:33px;background:#007acc;'></div>
<div class='t' style='left:1559px;top:93.38px;font-size:17.2px;color:#ffffff;font-weight:400;-webkit-text-stroke:0.2px currentColor;'>Call Stack</div>
<svg class='a' style='left:1647px;top:97px;' width='1143' height='8' viewBox='0 0 1143 8'><defs><pattern id='gp4' width='6' height='8' patternUnits='userSpaceOnUse'><rect x='0' y='0' width='2' height='1' fill='#5aa8e6'/><rect x='3' y='3' width='2' height='1' fill='#5aa8e6'/><rect x='0' y='6' width='2' height='2' fill='#5aa8e6'/></pattern></defs><rect width='1143' height='8' fill='url(#gp4)'/></svg>
<svg class='a' style='left:2799px;top:100px;' width='13' height='8' viewBox='0 0 13 8'><polygon points='0,0 12,0 6,6.5' fill='#a9d1f2'/></svg>
<svg class='a' style='left:2822px;top:93px;' width='13' height='17' viewBox='0 0 13 17'><rect x='3' y='1' width='7' height='9' fill='none' stroke='#a9d1f2' stroke-width='2'/><rect x='7' y='1' width='3' height='9' fill='#a9d1f2'/><rect x='0.5' y='9.5' width='12' height='2' fill='#a9d1f2'/><rect x='5.5' y='11' width='2' height='5' fill='#a9d1f2'/></svg>
<svg class='a' style='left:2847px;top:94px;' width='14' height='14' viewBox='0 0 14 14'><path d='M1.5 1.5 L12.5 12.5 M12.5 1.5 L1.5 12.5' stroke='#a9d1f2' stroke-width='2'/></svg>
<div class='t' style='left:1562px;top:124.04px;font-size:17.6px;color:#111;font-weight:400;-webkit-text-stroke:0.6px currentColor;'>Hotspots</div>
<svg class='a' style='left:2837px;top:121px;' width='24' height='24' viewBox='0 0 24 24'><circle cx='12' cy='12' r='10.5' fill='none' stroke='#808080' stroke-width='1.3'/><text x='12' y='18' font-family='Liberation Sans' font-size='17' fill='#808080' text-anchor='middle'>?</text></svg>
<svg class='a' style='left:1560px;top:154px;' width='20' height='20' viewBox='0 0 20 20'><rect x='5' y='1' width='13' height='10' fill='none' stroke='#222' stroke-width='2.4'/><rect x='1' y='8' width='13' height='10' fill='#f0f0f0' stroke='#222' stroke-width='2.4'/><rect x='6' y='11' width='9' height='3' fill='#222'/></svg>
<div class='a' style='left:1589px;top:150px;width:32px;height:32px;background:#e8eef6;box-sizing:border-box;border:2px solid #3d94f0;'></div>
<svg class='a' style='left:1592px;top:153px;' width='26' height='26' viewBox='0 0 26 26'><rect x='12' y='2' width='5' height='14' fill='#333'/><rect x='19' y='6' width='6' height='12' fill='none' stroke='#333' stroke-width='2'/><path d='M4 22 L16 10 M4 10 L16 22' stroke='#c82a1a' stroke-width='2.4'/></svg>
<div class='a' style='left:1626px;top:153px;width:2px;height:25px;background:#c8cad8;'></div>
<div class='t' style='left:1637px;top:158.37px;font-size:17.8px;color:#111;font-weight:400;'><span style='color:#1ea6a6'>Own+System</span><span style='display:inline-block;width:14px;text-align:center'>↓</span> / <span style='color:#3c7ac6'>Total</span> time</div>
<div class='a' style='left:1554px;top:185px;width:1312px;height:34px;background:#ffffff;box-sizing:border-box;border:2px solid #d6d6d6;'></div>
<div class='t' style='left:1562px;top:194.79px;font-size:17.3px;color:#a0a0a0;font-weight:400;'>Search methods</div>
<svg class='a' style='left:2808px;top:190px;' width='24' height='24' viewBox='0 0 24 24'><circle cx='15' cy='9' r='6' fill='none' stroke='#666' stroke-width='2.2'/><path d='M10.5 13.5 L4 20' stroke='#666' stroke-width='3'/><rect x='1' y='4' width='6' height='1.5' fill='#888'/><rect x='1' y='8' width='5' height='1.5' fill='#888'/><rect x='1' y='12' width='4' height='1.5' fill='#888'/></svg>
<svg class='a' style='left:2843px;top:191px;' width='14' height='20' viewBox='0 0 14 20'><rect x='4' y='1' width='6' height='9' fill='#444'/><rect x='1' y='9' width='12' height='2' fill='#444'/><rect x='6' y='11' width='2' height='7' fill='#444'/></svg>
<div class='a' style='left:1552px;top:219px;width:1300px;height:272px;background:#ffffff;'></div>
<div class='a' style='left:2852px;top:219px;width:15px;height:272px;background:#f4f4f4;'></div>
<div class='a' style='left:2854px;top:248px;width:10px;height:34px;background:#a9b1bd;'></div>
<svg class='a' style='left:2853px;top:226px;' width='12' height='8' viewBox='0 0 12 8'><path d='M2 6 L6 2 L10 6' fill='none' stroke='#a0a0a0' stroke-width='1.4'/></svg>
<svg class='a' style='left:2853px;top:477px;' width='12' height='8' viewBox='0 0 12 8'><path d='M2 2 L6 6 L10 2' fill='none' stroke='#a0a0a0' stroke-width='1.4'/></svg>
<div class='a' style='left:1552px;top:219px;width:1300px;height:272px;overflow:hidden'>
<div class='t' style='left:82.5px;transform:translateX(-100%);top:8.21px;font-size:17.4px;color:#6b1616;font-weight:400;-webkit-text-stroke:0.35px currentColor;'>22.0 %</div>
<div class='t' style='left:98px;top:7.83px;font-size:17.85px;color:#1e1e1e;font-weight:400;'><span style='color:inherit'>MoveNext</span> • <span class='sb' style='color:#1ea6a6'>1,138 ms</span> / <span style='color:#2f7bc4'>1,198 ms</span> • VRage.Library.Debugging.<b>MyTimedStatWindow`1+&lt;GetEnumerator&gt;d__14</b>.MoveNext()</div>
<div class='t' style='left:82.5px;transform:translateX(-100%);top:39.21px;font-size:17.4px;color:#6b1616;font-weight:400;-webkit-text-stroke:0.35px currentColor;'>13.3 %</div>
<div class='t' style='left:98px;top:38.83px;font-size:17.85px;color:#1e1e1e;font-weight:400;'><span style='color:inherit'>op_Addition</span> • <span class='sb' style='color:#1ea6a6'>690 ms</span> / <span style='color:#2f7bc4'>811 ms</span> • VRage.Library.Net.<b>DefaultQoSProvider+Statistics+SentTraffic</b>.op_Addition(in SentTraffic, in SentTraffic)</div>
<div class='t' style='left:82.5px;transform:translateX(-100%);top:70.21px;font-size:17.4px;color:#6b1616;font-weight:400;-webkit-text-stroke:0.35px currentColor;'>10.8 %</div>
<div class='t' style='left:98px;top:69.83px;font-size:17.85px;color:#1e1e1e;font-weight:400;'><span style='color:inherit'>op_Addition</span> • <span class='sb' style='color:#1ea6a6'>559 ms</span> • VRage.Library.Net.<b>DefaultQoSProvider+Statistics+ReceivedTraffic</b>.op_Addition(in ReceivedTraffic, in ReceivedTraffic)</div>
<div class='t' style='left:82.5px;transform:translateX(-100%);top:101.21px;font-size:17.4px;color:#6b1616;font-weight:400;-webkit-text-stroke:0.35px currentColor;'>10.7 %</div>
<div class='t' style='left:98px;top:100.83px;font-size:17.85px;color:#1e1e1e;font-weight:400;'><span style='color:inherit'>&lt;Tick&gt;b__14_0</span> • <span class='sb' style='color:#1ea6a6'>554 ms</span> / <span style='color:#2f7bc4'>1,413 ms</span> • VRage.Library.Net.<b>DefaultQoSProvider+WindowedStatistics+&lt;&gt;c</b>.&lt;Tick&gt;b__14_0(StatFrame, StatFrame)</div>
<div class='t' style='left:82.5px;transform:translateX(-100%);top:132.21px;font-size:17.4px;color:#5a1414;font-weight:400;-webkit-text-stroke:0.35px currentColor;'>9.8 %</div>
<div class='t' style='left:98px;top:131.83px;font-size:17.85px;color:#1e1e1e;font-weight:400;'><span style='color:inherit'>Tick</span> • <span class='sb' style='color:#1ea6a6'>508 ms</span> / <span style='color:#2f7bc4'>4,700 ms</span> • VRage.Library.Net.<b>DefaultQoSProvider+WindowedStatistics</b>.Tick()</div>
<div class='t' style='left:82.5px;transform:translateX(-100%);top:163.21px;font-size:17.4px;color:#5a1414;font-weight:400;-webkit-text-stroke:0.35px currentColor;'>9.1 %</div>
<div class='t' style='left:98px;top:162.83px;font-size:17.85px;color:#1e1e1e;font-weight:400;'><span style='color:inherit'>&lt;Tick&gt;b__14_1</span> • <span class='sb' style='color:#1ea6a6'>473 ms</span> / <span style='color:#2f7bc4'>1,395 ms</span> • VRage.Library.Net.<b>DefaultQoSProvider+WindowedStatistics+&lt;&gt;c</b>.&lt;Tick&gt;b__14_1(StatFrame, StatFrame)</div>
<div class='t' style='left:82.5px;transform:translateX(-100%);top:194.21px;font-size:17.4px;color:#4a1410;font-weight:400;-webkit-text-stroke:0.35px currentColor;'>7.9 %</div>
<div class='t' style='left:98px;top:193.83px;font-size:17.85px;color:#1e1e1e;font-weight:400;'><span style='color:inherit'>op_Addition</span> • <span class='sb' style='color:#1ea6a6'>411 ms</span> • VRage.Library.Net.<b>DefaultQoSProvider+Statistics+DroppedTraffic</b>.op_Addition(in DroppedTraffic, in DroppedTraffic)</div>
<div class='t' style='left:82.5px;transform:translateX(-100%);top:225.21px;font-size:17.4px;color:#111;font-weight:400;-webkit-text-stroke:0.35px currentColor;'>4.3 %</div>
<div class='t' style='left:98px;top:224.83px;font-size:17.85px;color:#1e1e1e;font-weight:400;'><span style='color:inherit'>TryFetch</span> • <span class='sb' style='color:#1ea6a6'>224 ms</span> / <span style='color:#2f7bc4'>240 ms</span> • Epic.OnlineServices.<b>Helper</b>.TryFetch(IntPtr, out T)</div>
<div class='t' style='left:82.5px;transform:translateX(-100%);top:256.21px;font-size:17.4px;color:#111;font-weight:400;-webkit-text-stroke:0.35px currentColor;'>3.5 %</div>
<div class='t' style='left:98px;top:255.83px;font-size:17.85px;color:#1e1e1e;font-weight:400;'><span style='color:inherit'>get_Current</span> • <span class='sb' style='color:#1ea6a6'>182 ms</span> • VRage.Library.Debugging.<b>MyTimedStatWindow`1+&lt;GetEnumerator&gt;d__14</b>.get_Current()</div>
</div>
<div class='a' style='left:1552px;top:491px;width:1279px;height:42px;background:#e3ecf9;box-sizing:border-box;border:1px solid #b9cdee;'></div>
<div class='t' style='left:1557px;top:501.87px;font-size:17.8px;color:#222;font-weight:400;'>User code</div>
<div class='a' style='left:1552px;top:523px;width:1080px;height:10px;background:#708090;'></div>
<div class='a' style='left:2632px;top:491px;width:1px;height:42px;background:#b9cdee;'></div>
<div class='t' style='left:2637px;top:501.87px;font-size:17.8px;color:#222;font-weight:400;'>Syste...</div>
<div class='a' style='left:2633px;top:523px;width:76px;height:10px;background:#d2d2d2;'></div>
<div class='a' style='left:2709px;top:491px;width:1px;height:42px;background:#b9cdee;'></div>
<div class='t' style='left:2715px;top:501.87px;font-size:17.8px;color:#222;font-weight:400;'>Linq</div>
<div class='a' style='left:2710px;top:523px;width:119px;height:10px;background:#90e070;'></div>
<div class='a' style='left:2829px;top:491px;width:1px;height:42px;background:#b9cdee;'></div>
<svg class='a' style='left:2838px;top:498px;' width='26' height='26' viewBox='0 0 26 26'><path d='M4 22 L13 13' stroke='#111' stroke-width='5' stroke-linecap='round'/><circle cx='17' cy='9' r='6.5' fill='#111'/><path d='M17 9 L24 2' stroke='#f0f0f0' stroke-width='4'/></svg>
<div class='t' style='left:1562px;top:542.04px;font-size:17.6px;color:#111;font-weight:400;-webkit-text-stroke:0.3px currentColor;'>Call Tree</div>
<svg class='a' style='left:1645px;top:547px;' width='1180' height='8' viewBox='0 0 1180 8'><defs><pattern id='gp5' width='6' height='8' patternUnits='userSpaceOnUse'><rect x='0' y='0' width='2' height='1' fill='#d0d0d0'/><rect x='3' y='3' width='2' height='1' fill='#d0d0d0'/><rect x='0' y='6' width='2' height='2' fill='#d0d0d0'/></pattern></defs><rect width='1180' height='8' fill='url(#gp5)'/></svg>
<svg class='a' style='left:2837px;top:539px;' width='24' height='24' viewBox='0 0 24 24'><circle cx='12' cy='12' r='10.5' fill='none' stroke='#808080' stroke-width='1.3'/><text x='12' y='18' font-family='Liberation Sans' font-size='17' fill='#808080' text-anchor='middle'>?</text></svg>
<svg class='a' style='left:1558px;top:572px;' width='22' height='22' viewBox='0 0 22 22'><circle cx='11' cy='11' r='9.5' fill='#d6d6d6'/><path d='M14 11 H6 M9.5 7 L6 11 L9.5 15' fill='none' stroke='#fff' stroke-width='2.2'/></svg>
<svg class='a' style='left:1589px;top:572px;' width='22' height='22' viewBox='0 0 22 22'><circle cx='11' cy='11' r='9.5' fill='#d6d6d6'/><path d='M8 11 H16 M12.5 7 L16 11 L12.5 15' fill='none' stroke='#fff' stroke-width='2.2'/></svg>
<svg class='a' style='left:1619px;top:572px;' width='22' height='22' viewBox='0 0 22 22'><circle cx='9' cy='9' r='6' fill='none' stroke='#222' stroke-width='2'/><path d='M13.5 13.5 L19 19' stroke='#222' stroke-width='2.4'/></svg>
<div class='a' style='left:1652px;top:571px;width:2px;height:26px;background:#c8cad8;'></div>
<svg class='a' style='left:1669px;top:571px;' width='22' height='20' viewBox='0 0 22 20'><rect x='2' y='4' width='17' height='14' fill='none' stroke='#b8b8b8' stroke-width='2'/><path d='M4 4 L12 12' stroke='#b8b8b8' stroke-width='2'/></svg>
<div class='t' style='left:1700px;top:575.04px;font-size:17.6px;color:#909090;font-weight:400;'>Backtraces</div>
<div class='a' style='left:1798px;top:571px;width:2px;height:26px;background:#c8cad8;'></div>
<svg class='a' style='left:1816px;top:571px;' width='20' height='20' viewBox='0 0 20 20'><rect x='1' y='11' width='4' height='8' fill='#222'/><rect x='7' y='3' width='4' height='16' fill='#222'/><rect x='13' y='8' width='4' height='11' fill='#222'/></svg>
<div class='t' style='left:1843px;top:575.04px;font-size:17.6px;color:#111;font-weight:400;'>Flame graph</div>
<div class='a' style='left:1552px;top:600px;width:1300px;height:589px;background:#ffffff;'></div>
<div class='a' style='left:2852px;top:600px;width:15px;height:589px;background:#f4f4f4;'></div>
<div class='a' style='left:2854px;top:630px;width:10px;height:263px;background:#a9b1bd;'></div>
<svg class='a' style='left:2853px;top:607px;' width='12' height='8' viewBox='0 0 12 8'><path d='M2 6 L6 2 L10 6' fill='none' stroke='#a0a0a0' stroke-width='1.4'/></svg>
<svg class='a' style='left:2853px;top:1172px;' width='12' height='8' viewBox='0 0 12 8'><path d='M2 2 L6 6 L10 2' fill='none' stroke='#a0a0a0' stroke-width='1.4'/></svg>
<div class='a' style='left:1552px;top:600px;width:1300px;height:589px;overflow:hidden'>
<div class='a' style='left:0px;top:310.6px;width:1297px;height:217px;background:#e3eaf7;'></div>
<div class='a' style='left:0px;top:280px;width:1297px;height:31px;background:#3399ff;'></div>
<svg class='a' style='left:6px;top:12px;' width='11' height='11' viewBox='0 0 11 11'><polygon points='10,0 10,10 0,10' fill='#d6301c'/></svg>
<svg class='a' style='left:31px;top:10px;' width='16' height='14' viewBox='0 0 16 14'><rect x='0' y='0' width='15' height='2' fill='#333'/><polygon points='1,4 14,4 7.5,12' fill='#333'/><polygon points='4,5 11,5 7.5,9' fill='#fff'/></svg>
<div class='t' style='left:50px;top:8.21px;font-size:17.4px;color:#d6301c;font-weight:400;'>100 %</div>
<div class='t' style='left:112px;top:7.83px;font-size:17.85px;color:#1e1e1e;font-weight:400;'><span style='color:#8a8a8a'>All Calls</span> <span style='color:#8a8a8a'>•</span> <span class='sb' style='color:#2f7bc4'>5,183 ms</span></div>
<svg class='a' style='left:22px;top:43px;' width='11' height='11' viewBox='0 0 11 11'><polygon points='10,0 10,10 0,10' fill='#d6301c'/></svg>
<div class='t' style='left:41px;top:39.21px;font-size:17.4px;color:#d6301c;font-weight:400;'>100 %</div>
<div class='t' style='left:103px;top:38.83px;font-size:17.85px;color:#1e1e1e;font-weight:400;'><span style='color:#1e1e1e'>Worker</span> <span style='color:#1e1e1e'>•</span> <span class='sb' style='color:#2f7bc4'>5,183 ms</span> • Sandbox.Engine.Networking.<b>MyNetworkMonitor</b>.Worker()</div>
<svg class='a' style='left:37px;top:74px;' width='11' height='11' viewBox='0 0 11 11'><polygon points='10,0 10,10 0,10' fill='#d6301c'/></svg>
<div class='t' style='left:56px;top:70.21px;font-size:17.4px;color:#d6301c;font-weight:400;'>99.6 %</div>
<div class='t' style='left:125px;top:69.83px;font-size:17.85px;color:#1e1e1e;font-weight:400;'><span style='color:#1e1e1e'>UpdateInternal</span> <span style='color:#1e1e1e'>•</span> <span class='sb' style='color:#2f7bc4'>5,160 ms</span> • Sandbox.Engine.Networking.<b>MyNetworkMonitor</b>.UpdateInternal()</div>
<svg class='a' style='left:52px;top:105px;' width='11' height='11' viewBox='0 0 11 11'><polygon points='10,0 10,10 0,10' fill='#d6301c'/></svg>
<div class='t' style='left:71px;top:101.21px;font-size:17.4px;color:#d6301c;font-weight:400;'>97.0 %</div>
<div class='t' style='left:140px;top:100.83px;font-size:17.85px;color:#1e1e1e;font-weight:400;'><span style='color:#1e1e1e'>UpdateNetworkThread</span> <span style='color:#1e1e1e'>•</span> <span class='sb' style='color:#2f7bc4'>5,027 ms</span> • Sandbox.Engine.Networking.<b>MyGameService</b>.UpdateNetworkThread(Boolean)</div>
<svg class='a' style='left:67px;top:136px;' width='11' height='11' viewBox='0 0 11 11'><polygon points='10,0 10,10 0,10' fill='#d6301c'/></svg>
<div class='t' style='left:86px;top:132.21px;font-size:17.4px;color:#d6301c;font-weight:400;'>97.0 %</div>
<div class='t' style='left:155px;top:131.83px;font-size:17.85px;color:#1e1e1e;font-weight:400;'><span style='color:#1e1e1e'>UpdateNetworkThread</span> <span style='color:#1e1e1e'>•</span> <span class='sb' style='color:#2f7bc4'>5,026 ms</span> • VRage.EOS.<b>MyEOSNetworking</b>.UpdateNetworkThread(Boolean)</div>
<svg class='a' style='left:82px;top:167px;' width='11' height='11' viewBox='0 0 11 11'><polygon points='10,0 10,10 0,10' fill='#d6301c'/></svg>
<div class='t' style='left:101px;top:163.21px;font-size:17.4px;color:#d6301c;font-weight:400;'>96.2 %</div>
<div class='t' style='left:170px;top:162.83px;font-size:17.85px;color:#1e1e1e;font-weight:400;'><span style='color:#1e1e1e'>ProcessQueues</span> <span style='color:#1e1e1e'>•</span> <span class='sb' style='color:#2f7bc4'>4,985 ms</span> • VRage.EOS.<b>MyEOSPeer2Peer</b>.ProcessQueues()</div>
<svg class='a' style='left:97px;top:198px;' width='11' height='11' viewBox='0 0 11 11'><polygon points='10,0 10,10 0,10' fill='#d6301c'/></svg>
<div class='t' style='left:116px;top:194.21px;font-size:17.4px;color:#d6301c;font-weight:400;'>96.2 %</div>
<div class='t' style='left:185px;top:193.83px;font-size:17.85px;color:#1e1e1e;font-weight:400;'><span style='color:#1e1e1e'>ProcessQueues</span> <span style='color:#1e1e1e'>•</span> <span class='sb' style='color:#2f7bc4'>4,984 ms</span> • VRage.EOS.<b>MyP2PQoSAdapter</b>.ProcessQueues()</div>
<svg class='a' style='left:112px;top:229px;' width='11' height='11' viewBox='0 0 11 11'><polygon points='10,0 10,10 0,10' fill='#d6301c'/></svg>
<div class='t' style='left:131px;top:225.21px;font-size:17.4px;color:#d6301c;font-weight:400;'>90.7 %</div>
<div class='t' style='left:200px;top:224.83px;font-size:17.85px;color:#1e1e1e;font-weight:400;'><span style='color:#1e1e1e'>UpdateStats</span> <span style='color:#1e1e1e'>•</span> <span class='sb' style='color:#2f7bc4'>4,703 ms</span> • VRage.EOS.<b>MyP2PQoSAdapter</b>.UpdateStats()</div>
<svg class='a' style='left:127px;top:260px;' width='11' height='11' viewBox='0 0 11 11'><polygon points='10,0 10,10 0,10' fill='#d6301c'/></svg>
<div class='t' style='left:146px;top:256.21px;font-size:17.4px;color:#d6301c;font-weight:400;'>90.7 %</div>
<div class='t' style='left:215px;top:255.83px;font-size:17.85px;color:#1e1e1e;font-weight:400;'><span style='color:#1e1e1e'>Tick</span> <span style='color:#1e1e1e'>•</span> <span class='sb' style='color:#2f7bc4'>4,700 ms</span> • VRage.Library.Net.<b>DefaultQoSProvider+WindowedStatistics</b>.Tick()</div>
<svg class='a' style='left:142px;top:291px;' width='11' height='11' viewBox='0 0 11 11'><polygon points='10,0 10,10 0,10' fill='#d6301c'/></svg>
<div class='t' style='left:161px;top:287.21px;font-size:17.4px;color:#ffffff;font-weight:400;'>90.3 %</div>
<div class='t' style='left:230px;top:286.83px;font-size:17.85px;color:#ffffff;font-weight:400;'><span style='color:#ffffff'>Aggregate</span> <span style='color:#ffffff'>•</span> <span class='sb' style='color:#fff'>4,680 ms</span> • System.Linq.<b>Enumerable</b>.Aggregate(IEnumerable, Func)</div>
<svg class='a' style='left:160px;top:319px;' width='10' height='16' viewBox='0 0 10 16'><polygon points='1,1 9,8 1,15' fill='#7a1a12'/></svg>
<div class='t' style='left:176px;top:318.21px;font-size:17.4px;color:#7a1a12;font-weight:400;'>27.3 %</div>
<div class='t' style='left:245px;top:317.83px;font-size:17.85px;color:#1e1e1e;font-weight:400;'><span style='color:#1e1e1e'>&lt;Tick&gt;b__14_0</span> <span style='color:#1e1e1e'>•</span> <span class='sb' style='color:#2f7bc4'>1,413 ms</span> • VRage.Library.Net.<b>DefaultQoSProvider+WindowedStatistics+&lt;&gt;c</b>.&lt;Tick&gt;b__14_0(StatFrame, StatFrame)</div>
<svg class='a' style='left:160px;top:350px;' width='10' height='16' viewBox='0 0 10 16'><polygon points='1,1 9,8 1,15' fill='#7a1a12'/></svg>
<div class='t' style='left:176px;top:349.21px;font-size:17.4px;color:#7a1a12;font-weight:400;'>26.9 %</div>
<div class='t' style='left:245px;top:348.83px;font-size:17.85px;color:#1e1e1e;font-weight:400;'><span style='color:#1e1e1e'>&lt;Tick&gt;b__14_1</span> <span style='color:#1e1e1e'>•</span> <span class='sb' style='color:#2f7bc4'>1,395 ms</span> • VRage.Library.Net.<b>DefaultQoSProvider+WindowedStatistics+&lt;&gt;c</b>.&lt;Tick&gt;b__14_1(StatFrame, StatFrame)</div>
<svg class='a' style='left:160px;top:381px;' width='10' height='16' viewBox='0 0 10 16'><polygon points='1,1 9,8 1,15' fill='#7a1a12'/></svg>
<div class='t' style='left:176px;top:380.21px;font-size:17.4px;color:#7a1a12;font-weight:400;'>23.1 %</div>
<div class='t' style='left:245px;top:379.83px;font-size:17.85px;color:#1e1e1e;font-weight:400;'><span style='color:#1e1e1e'>MoveNext</span> <span style='color:#1e1e1e'>•</span> <span class='sb' style='color:#2f7bc4'>1,198 ms</span> • VRage.Library.Debugging.<b>MyTimedStatWindow`1+&lt;GetEnumerator&gt;d__14</b>.MoveNext()</div>
<svg class='a' style='left:157px;top:413px;' width='16' height='14' viewBox='0 0 16 14'><rect x='0' y='0' width='15' height='2' fill='#333'/><polygon points='1,4 14,4 7.5,12' fill='#333'/><polygon points='4,5 11,5 7.5,9' fill='#fff'/></svg>
<div class='t' style='left:176px;top:411.21px;font-size:17.4px;color:#7a1a12;font-weight:400;'>7.80 %</div>
<div class='t' style='left:245px;top:410.83px;font-size:17.85px;color:#1e1e1e;font-weight:400;'><span style='color:#8a8a8a'>clr.dll</span> <span style='color:#8a8a8a'>•</span> <span class='sb' style='color:#2f7bc4'>404 ms</span></div>
<svg class='a' style='left:160px;top:443px;' width='10' height='16' viewBox='0 0 10 16'><polygon points='1,1 9,8 1,15' fill='#111'/></svg>
<div class='t' style='left:176px;top:442.21px;font-size:17.4px;color:#111;font-weight:400;'>3.51 %</div>
<div class='t' style='left:245px;top:441.83px;font-size:17.85px;color:#1e1e1e;font-weight:400;'><span style='color:#1e1e1e'>get_Current</span> <span style='color:#1e1e1e'>•</span> <span class='sb' style='color:#2f7bc4'>182 ms</span> • VRage.Library.Debugging.<b>MyTimedStatWindow`1+&lt;GetEnumerator&gt;d__14</b>.get_Current()</div>
<div class='t' style='left:176px;top:473.21px;font-size:17.4px;color:#111;font-weight:400;'>0.04 %</div>
<div class='t' style='left:245px;top:472.83px;font-size:17.85px;color:#1e1e1e;font-weight:400;'><span style='color:#8a8a8a'>[Unknown]</span> <span style='color:#8a8a8a'>•</span> <span class='sb' style='color:#2f7bc4'>1.8 ms</span></div>
<svg class='a' style='left:160px;top:505px;' width='10' height='16' viewBox='0 0 10 16'><polygon points='1,1 9,8 1,15' fill='#111'/></svg>
<div class='t' style='left:176px;top:504.21px;font-size:17.4px;color:#111;font-weight:400;'>0.00 %</div>
<div class='t' style='left:245px;top:503.83px;font-size:17.85px;color:#1e1e1e;font-weight:400;'><span style='color:#1e1e1e'>GetEnumerator</span> <span style='color:#1e1e1e'>•</span> <span class='sb' style='color:#2f7bc4'>0.2 ms</span> • VRage.Library.Debugging.<b>MyTimedStatWindow`1</b>.GetEnumerator()</div>
<div class='t' style='left:161px;top:535.21px;font-size:17.4px;color:#111;font-weight:400;'>0.33 %</div>
<div class='t' style='left:230px;top:534.83px;font-size:17.85px;color:#1e1e1e;font-weight:400;'><span style='color:#8a8a8a'>[Unknown]</span> <span style='color:#8a8a8a'>•</span> <span class='sb' style='color:#2f7bc4'>17 ms</span></div>
<svg class='a' style='left:145px;top:567px;' width='10' height='16' viewBox='0 0 10 16'><polygon points='1,1 9,8 1,15' fill='#111'/></svg>
<div class='t' style='left:161px;top:566.21px;font-size:17.4px;color:#111;font-weight:400;'>0.04 %</div>
<div class='t' style='left:230px;top:565.83px;font-size:17.85px;color:#1e1e1e;font-weight:400;'><span style='color:#1e1e1e'>get_Current</span> <span style='color:#1e1e1e'>•</span> <span class='sb' style='color:#2f7bc4'>2.0 ms</span> • VRage.Library.Debugging.<b>MyTimedStatWindow`1</b>.get_Current()</div>
</div>
<div class='a' style='left:1552px;top:1189px;width:1315px;height:15px;background:#f0f0f0;'></div>
<div class='a' style='left:1580px;top:1190px;width:1229px;height:13px;background:#919db2;'></div>
<svg class='a' style='left:1555px;top:1190px;' width='12' height='13' viewBox='0 0 12 13'><path d='M8 2 L3 6.5 L8 11' fill='none' stroke='#a8b0c0' stroke-width='1.4'/></svg>
<svg class='a' style='left:2826px;top:1190px;' width='12' height='13' viewBox='0 0 12 13'><path d='M4 2 L9 6.5 L4 11' fill='none' stroke='#a8b0c0' stroke-width='1.4'/></svg>
<div class='a' style='left:1551px;top:1216px;width:1318px;height:829px;background:#f0f0f0;box-sizing:border-box;border:1px solid #cfcfcf;'></div>
<div class='t' style='left:1560px;top:1227.71px;font-size:17.4px;color:#3a3a3a;font-weight:400;'>Source View - System.Linq.Enumerable.Aggregate</div>
<svg class='a' style='left:1967px;top:1230px;' width='825' height='8' viewBox='0 0 825 8'><defs><pattern id='gp6' width='6' height='8' patternUnits='userSpaceOnUse'><rect x='0' y='0' width='2' height='1' fill='#d0d0d0'/><rect x='3' y='3' width='2' height='1' fill='#d0d0d0'/><rect x='0' y='6' width='2' height='2' fill='#d0d0d0'/></pattern></defs><rect width='825' height='8' fill='url(#gp6)'/></svg>
<svg class='a' style='left:2799px;top:1232px;' width='13' height='8' viewBox='0 0 13 8'><polygon points='0,0 12,0 6,6.5' fill='#606060'/></svg>
<svg class='a' style='left:2822px;top:1225px;' width='13' height='17' viewBox='0 0 13 17'><rect x='3' y='1' width='7' height='9' fill='none' stroke='#606060' stroke-width='2'/><rect x='7' y='1' width='3' height='9' fill='#606060'/><rect x='0.5' y='9.5' width='12' height='2' fill='#606060'/><rect x='5.5' y='11' width='2' height='5' fill='#606060'/></svg>
<svg class='a' style='left:2847px;top:1226px;' width='14' height='14' viewBox='0 0 14 14'><path d='M1.5 1.5 L12.5 12.5 M12.5 1.5 L1.5 12.5' stroke='#606060' stroke-width='2'/></svg>
<div class='a' style='left:1552px;top:1250px;width:1316px;height:34px;background:#eeeef2;'></div>
<svg class='a' style='left:1557px;top:1257px;' width='20' height='20' viewBox='0 0 20 20'><path d='M5 2 H13 L17 6 V17 H5z' fill='none' stroke='#333' stroke-width='2'/><circle cx='7' cy='14' r='6' fill='#c0392b'/><rect x='3' y='13' width='8' height='2.4' fill='#fff'/></svg>
<div class='t' style='left:1584px;top:1261.04px;font-size:17.6px;color:#444;font-weight:400;'>Error</div>
<div class='a' style='left:1627px;top:1253px;width:189px;height:31px;background:#d6d6de;'></div>
<svg class='a' style='left:1631px;top:1256px;' width='22' height='22' viewBox='0 0 22 22'><rect x='0' y='0' width='22' height='22' rx='2' fill='#6b57ff'/><rect x='3' y='3' width='16' height='16' fill='#111'/><text x='4' y='12' font-family='Liberation Sans' font-size='9' font-weight='700' fill='#fff'>DP</text><rect x='4' y='15' width='7' height='1.5' fill='#fff'/></svg>
<div class='t' style='left:1659px;top:1261.04px;font-size:17.6px;color:#666;font-weight:400;'>Decompiled source</div>
<div class='a' style='left:1552px;top:1283px;width:1316px;height:3px;background:#cdd1e2;'></div>
<div class='a' style='left:1552px;top:1286px;width:1316px;height:44px;background:#eeeef2;'></div>
<svg class='a' style='left:2532px;top:1298px;' width='21' height='21' viewBox='0 0 21 21'><rect x='1' y='1' width='19' height='19' fill='#fff' stroke='#555' stroke-width='2'/></svg>
<div class='t' style='left:2560px;top:1301.04px;font-size:17.6px;color:#111;font-weight:400;'>Show IL code</div>
<div class='a' style='left:2672px;top:1294px;width:189px;height:30px;background:#f2f2f5;box-sizing:border-box;border:1px solid #cccccc;'></div>
<div class='t' style='left:2682px;top:1302.04px;font-size:17.6px;color:#777;font-weight:400;'>Open in Visual Studio</div>
<div class='a' style='left:1552px;top:1330px;width:1291px;height:687px;background:#ffffff;'></div>
<div class='a' style='left:2843px;top:1330px;width:24px;height:687px;background:#f0f0f0;'></div>
<svg class='a' style='left:2845px;top:1340px;' width='20' height='12' viewBox='0 0 20 12'><path d='M3 10 L10 3 L17 10' fill='none' stroke='#444' stroke-width='2.4'/></svg>
<svg class='a' style='left:2845px;top:1997px;' width='20' height='12' viewBox='0 0 20 12'><path d='M3 2 L10 9 L17 2' fill='none' stroke='#444' stroke-width='2.4'/></svg>
<div class='a' style='left:2843px;top:1635px;width:23px;height:7px;background:#cfcfcf;'></div>
<div class='a' style='left:1552px;top:2017px;width:1315px;height:27px;background:#f0f0f0;'></div>
<svg class='a' style='left:1556px;top:2023px;' width='12' height='14' viewBox='0 0 12 14'><path d='M9 2 L3 7 L9 12' fill='none' stroke='#bbb' stroke-width='2'/></svg>
<svg class='a' style='left:2822px;top:2023px;' width='12' height='14' viewBox='0 0 12 14'><path d='M3 2 L9 7 L3 12' fill='none' stroke='#bbb' stroke-width='2'/></svg>
<div class='a' style='left:1613px;top:1355px;width:1230px;height:408px;background:#e7f2fc;'></div>
<div class='a' style='left:1598px;top:1330px;width:1px;height:687px;background-image:repeating-linear-gradient(180deg,#5aa9bd 0 1px,transparent 1px 3px)'></div>
<div class='a' style='left:1552px;top:1330px;width:1291px;height:687px;overflow:hidden'>
<div class='a' style='left:105px;top:56.0px;width:1px;height:384.0px;background:#dedede'></div>
<div class='a' style='left:127px;top:152.0px;width:1px;height:264.0px;background:#dedede'></div>
<div class='a' style='left:149px;top:320.0px;width:1px;height:48.0px;background:#dedede'></div>
<div class='a' style='left:105px;top:488.0px;width:1px;height:216.0px;background:#dedede'></div>
<div class='t' style='left:44px;transform:translateX(-100%);top:5.01px;font-size:18.25px;color:#2b8aa6;font-weight:400;font-family:"Liberation Mono",monospace;-webkit-text-stroke:0.2px currentColor;'>1526</div>
<div class='t' style='left:61.700000000000045px;top:5.01px;font-size:18.25px;color:#000;font-weight:400;font-family:"Liberation Mono",monospace;-webkit-text-stroke:0.3px currentColor;'></div>
<div class='t' style='left:44px;transform:translateX(-100%);top:29.01px;font-size:18.25px;color:#2b8aa6;font-weight:400;font-family:"Liberation Mono",monospace;-webkit-text-stroke:0.2px currentColor;'>1527</div>
<div class='t' style='left:61.700000000000045px;top:29.01px;font-size:18.25px;color:#000;font-weight:400;font-family:"Liberation Mono",monospace;-webkit-text-stroke:0.3px currentColor;'>    [__DynamicallyInvokable]</div>
<div class='t' style='left:44px;transform:translateX(-100%);top:53.01px;font-size:18.25px;color:#2b8aa6;font-weight:400;font-family:"Liberation Mono",monospace;-webkit-text-stroke:0.2px currentColor;'>1528</div>
<div class='t' style='left:61.700000000000045px;top:53.01px;font-size:18.25px;color:#000;font-weight:400;font-family:"Liberation Mono",monospace;-webkit-text-stroke:0.3px currentColor;'>    <span style='color:#0000ff'>public</span> <span style='color:#0000ff'>static</span> TSource Aggregate&lt;TSource&gt;(</div>
<div class='t' style='left:44px;transform:translateX(-100%);top:77.01px;font-size:18.25px;color:#2b8aa6;font-weight:400;font-family:"Liberation Mono",monospace;-webkit-text-stroke:0.2px currentColor;'>1529</div>
<div class='t' style='left:61.700000000000045px;top:77.01px;font-size:18.25px;color:#000;font-weight:400;font-family:"Liberation Mono",monospace;-webkit-text-stroke:0.3px currentColor;'>      <span style='color:#0000ff'>this</span> IEnumerable&lt;TSource&gt; source,</div>
<div class='t' style='left:44px;transform:translateX(-100%);top:101.01px;font-size:18.25px;color:#2b8aa6;font-weight:400;font-family:"Liberation Mono",monospace;-webkit-text-stroke:0.2px currentColor;'>1530</div>
<div class='t' style='left:61.700000000000045px;top:101.01px;font-size:18.25px;color:#000;font-weight:400;font-family:"Liberation Mono",monospace;-webkit-text-stroke:0.3px currentColor;'>      Func&lt;TSource, TSource, TSource&gt; func)</div>
<div class='t' style='left:44px;transform:translateX(-100%);top:125.01px;font-size:18.25px;color:#2b8aa6;font-weight:400;font-family:"Liberation Mono",monospace;-webkit-text-stroke:0.2px currentColor;'>1531</div>
<div class='t' style='left:61.700000000000045px;top:125.01px;font-size:18.25px;color:#000;font-weight:400;font-family:"Liberation Mono",monospace;-webkit-text-stroke:0.3px currentColor;'>    {</div>
<div class='t' style='left:44px;transform:translateX(-100%);top:149.01px;font-size:18.25px;color:#2b8aa6;font-weight:400;font-family:"Liberation Mono",monospace;-webkit-text-stroke:0.2px currentColor;'>1532</div>
<div class='t' style='left:61.700000000000045px;top:149.01px;font-size:18.25px;color:#000;font-weight:400;font-family:"Liberation Mono",monospace;-webkit-text-stroke:0.3px currentColor;'>      <span style='color:#0000ff'>if</span> (source == <span style='color:#0000ff'>null</span>)</div>
<div class='t' style='left:44px;transform:translateX(-100%);top:173.01px;font-size:18.25px;color:#2b8aa6;font-weight:400;font-family:"Liberation Mono",monospace;-webkit-text-stroke:0.2px currentColor;'>1533</div>
<div class='t' style='left:61.700000000000045px;top:173.01px;font-size:18.25px;color:#000;font-weight:400;font-family:"Liberation Mono",monospace;-webkit-text-stroke:0.3px currentColor;'>        <span style='color:#0000ff'>throw</span> Error.ArgumentNull(nameof (source));</div>
<div class='t' style='left:44px;transform:translateX(-100%);top:197.01px;font-size:18.25px;color:#2b8aa6;font-weight:400;font-family:"Liberation Mono",monospace;-webkit-text-stroke:0.2px currentColor;'>1534</div>
<div class='t' style='left:61.700000000000045px;top:197.01px;font-size:18.25px;color:#000;font-weight:400;font-family:"Liberation Mono",monospace;-webkit-text-stroke:0.3px currentColor;'>      <span style='color:#0000ff'>if</span> (func == <span style='color:#0000ff'>null</span>)</div>
<div class='t' style='left:44px;transform:translateX(-100%);top:221.01px;font-size:18.25px;color:#2b8aa6;font-weight:400;font-family:"Liberation Mono",monospace;-webkit-text-stroke:0.2px currentColor;'>1535</div>
<div class='t' style='left:61.700000000000045px;top:221.01px;font-size:18.25px;color:#000;font-weight:400;font-family:"Liberation Mono",monospace;-webkit-text-stroke:0.3px currentColor;'>        <span style='color:#0000ff'>throw</span> Error.ArgumentNull(nameof (func));</div>
<div class='t' style='left:44px;transform:translateX(-100%);top:245.01px;font-size:18.25px;color:#2b8aa6;font-weight:400;font-family:"Liberation Mono",monospace;-webkit-text-stroke:0.2px currentColor;'>1536</div>
<div class='t' style='left:61.700000000000045px;top:245.01px;font-size:18.25px;color:#000;font-weight:400;font-family:"Liberation Mono",monospace;-webkit-text-stroke:0.3px currentColor;'>      <span style='color:#0000ff'>using</span> (IEnumerator&lt;TSource&gt; enumerator = source.GetEnumerator())</div>
<div class='t' style='left:44px;transform:translateX(-100%);top:269.01px;font-size:18.25px;color:#2b8aa6;font-weight:400;font-family:"Liberation Mono",monospace;-webkit-text-stroke:0.2px currentColor;'>1537</div>
<div class='t' style='left:61.700000000000045px;top:269.01px;font-size:18.25px;color:#000;font-weight:400;font-family:"Liberation Mono",monospace;-webkit-text-stroke:0.3px currentColor;'>      {</div>
<div class='t' style='left:44px;transform:translateX(-100%);top:293.01px;font-size:18.25px;color:#2b8aa6;font-weight:400;font-family:"Liberation Mono",monospace;-webkit-text-stroke:0.2px currentColor;'>1538</div>
<div class='t' style='left:61.700000000000045px;top:293.01px;font-size:18.25px;color:#000;font-weight:400;font-family:"Liberation Mono",monospace;-webkit-text-stroke:0.3px currentColor;'>        TSource source1 = enumerator.MoveNext() ? enumerator.Current : <span style='color:#0000ff'>throw</span> Error.NoElements();</div>
<div class='t' style='left:44px;transform:translateX(-100%);top:317.01px;font-size:18.25px;color:#2b8aa6;font-weight:400;font-family:"Liberation Mono",monospace;-webkit-text-stroke:0.2px currentColor;'>1539</div>
<div class='t' style='left:61.700000000000045px;top:317.01px;font-size:18.25px;color:#000;font-weight:400;font-family:"Liberation Mono",monospace;-webkit-text-stroke:0.3px currentColor;'>        <span style='color:#0000ff'>while</span> (enumerator.MoveNext())</div>
<div class='t' style='left:44px;transform:translateX(-100%);top:341.01px;font-size:18.25px;color:#2b8aa6;font-weight:400;font-family:"Liberation Mono",monospace;-webkit-text-stroke:0.2px currentColor;'>1540</div>
<div class='t' style='left:61.700000000000045px;top:341.01px;font-size:18.25px;color:#000;font-weight:400;font-family:"Liberation Mono",monospace;-webkit-text-stroke:0.3px currentColor;'>          source1 = func(source1, enumerator.Current);</div>
<div class='t' style='left:44px;transform:translateX(-100%);top:365.01px;font-size:18.25px;color:#2b8aa6;font-weight:400;font-family:"Liberation Mono",monospace;-webkit-text-stroke:0.2px currentColor;'>1541</div>
<div class='t' style='left:61.700000000000045px;top:365.01px;font-size:18.25px;color:#000;font-weight:400;font-family:"Liberation Mono",monospace;-webkit-text-stroke:0.3px currentColor;'>        <span style='color:#0000ff'>return</span> source1;</div>
<div class='t' style='left:44px;transform:translateX(-100%);top:389.01px;font-size:18.25px;color:#2b8aa6;font-weight:400;font-family:"Liberation Mono",monospace;-webkit-text-stroke:0.2px currentColor;'>1542</div>
<div class='t' style='left:61.700000000000045px;top:389.01px;font-size:18.25px;color:#000;font-weight:400;font-family:"Liberation Mono",monospace;-webkit-text-stroke:0.3px currentColor;'>      }</div>
<div class='t' style='left:44px;transform:translateX(-100%);top:413.01px;font-size:18.25px;color:#2b8aa6;font-weight:400;font-family:"Liberation Mono",monospace;-webkit-text-stroke:0.2px currentColor;'>1543</div>
<div class='t' style='left:61.700000000000045px;top:413.01px;font-size:18.25px;color:#000;font-weight:400;font-family:"Liberation Mono",monospace;-webkit-text-stroke:0.3px currentColor;'>    }</div>
<div class='t' style='left:44px;transform:translateX(-100%);top:437.01px;font-size:18.25px;color:#2b8aa6;font-weight:400;font-family:"Liberation Mono",monospace;-webkit-text-stroke:0.2px currentColor;'>1544</div>
<div class='t' style='left:61.700000000000045px;top:437.01px;font-size:18.25px;color:#000;font-weight:400;font-family:"Liberation Mono",monospace;-webkit-text-stroke:0.3px currentColor;'></div>
<div class='t' style='left:44px;transform:translateX(-100%);top:461.01px;font-size:18.25px;color:#2b8aa6;font-weight:400;font-family:"Liberation Mono",monospace;-webkit-text-stroke:0.2px currentColor;'>1545</div>
<div class='t' style='left:61.700000000000045px;top:461.01px;font-size:18.25px;color:#000;font-weight:400;font-family:"Liberation Mono",monospace;-webkit-text-stroke:0.3px currentColor;'>    [__DynamicallyInvokable]</div>
<div class='t' style='left:44px;transform:translateX(-100%);top:485.01px;font-size:18.25px;color:#2b8aa6;font-weight:400;font-family:"Liberation Mono",monospace;-webkit-text-stroke:0.2px currentColor;'>1546</div>
<div class='t' style='left:61.700000000000045px;top:485.01px;font-size:18.25px;color:#000;font-weight:400;font-family:"Liberation Mono",monospace;-webkit-text-stroke:0.3px currentColor;'>    <span style='color:#0000ff'>public</span> <span style='color:#0000ff'>static</span> TAccumulate Aggregate&lt;TSource, TAccumulate&gt;(</div>
<div class='t' style='left:44px;transform:translateX(-100%);top:509.01px;font-size:18.25px;color:#2b8aa6;font-weight:400;font-family:"Liberation Mono",monospace;-webkit-text-stroke:0.2px currentColor;'>1547</div>
<div class='t' style='left:61.700000000000045px;top:509.01px;font-size:18.25px;color:#000;font-weight:400;font-family:"Liberation Mono",monospace;-webkit-text-stroke:0.3px currentColor;'>      <span style='color:#0000ff'>this</span> IEnumerable&lt;TSource&gt; source,</div>
<div class='t' style='left:44px;transform:translateX(-100%);top:533.01px;font-size:18.25px;color:#2b8aa6;font-weight:400;font-family:"Liberation Mono",monospace;-webkit-text-stroke:0.2px currentColor;'>1548</div>
<div class='t' style='left:61.700000000000045px;top:533.01px;font-size:18.25px;color:#000;font-weight:400;font-family:"Liberation Mono",monospace;-webkit-text-stroke:0.3px currentColor;'>      TAccumulate seed,</div>
<div class='t' style='left:44px;transform:translateX(-100%);top:557.01px;font-size:18.25px;color:#2b8aa6;font-weight:400;font-family:"Liberation Mono",monospace;-webkit-text-stroke:0.2px currentColor;'>1549</div>
<div class='t' style='left:61.700000000000045px;top:557.01px;font-size:18.25px;color:#000;font-weight:400;font-family:"Liberation Mono",monospace;-webkit-text-stroke:0.3px currentColor;'>      Func&lt;TAccumulate, TSource, TAccumulate&gt; func)</div>
<div class='t' style='left:44px;transform:translateX(-100%);top:581.01px;font-size:18.25px;color:#2b8aa6;font-weight:400;font-family:"Liberation Mono",monospace;-webkit-text-stroke:0.2px currentColor;'>1550</div>
<div class='t' style='left:61.700000000000045px;top:581.01px;font-size:18.25px;color:#000;font-weight:400;font-family:"Liberation Mono",monospace;-webkit-text-stroke:0.3px currentColor;'>    {</div>
<div class='t' style='left:44px;transform:translateX(-100%);top:605.01px;font-size:18.25px;color:#2b8aa6;font-weight:400;font-family:"Liberation Mono",monospace;-webkit-text-stroke:0.2px currentColor;'>1551</div>
<div class='t' style='left:61.700000000000045px;top:605.01px;font-size:18.25px;color:#000;font-weight:400;font-family:"Liberation Mono",monospace;-webkit-text-stroke:0.3px currentColor;'>      <span style='color:#0000ff'>if</span> (source == <span style='color:#0000ff'>null</span>)</div>
<div class='t' style='left:44px;transform:translateX(-100%);top:629.01px;font-size:18.25px;color:#2b8aa6;font-weight:400;font-family:"Liberation Mono",monospace;-webkit-text-stroke:0.2px currentColor;'>1552</div>
<div class='t' style='left:61.700000000000045px;top:629.01px;font-size:18.25px;color:#000;font-weight:400;font-family:"Liberation Mono",monospace;-webkit-text-stroke:0.3px currentColor;'>        <span style='color:#0000ff'>throw</span> Error.ArgumentNull(nameof (source));</div>
<div class='t' style='left:44px;transform:translateX(-100%);top:653.01px;font-size:18.25px;color:#2b8aa6;font-weight:400;font-family:"Liberation Mono",monospace;-webkit-text-stroke:0.2px currentColor;'>1553</div>
<div class='t' style='left:61.700000000000045px;top:653.01px;font-size:18.25px;color:#000;font-weight:400;font-family:"Liberation Mono",monospace;-webkit-text-stroke:0.3px currentColor;'>      <span style='color:#0000ff'>if</span> (func == <span style='color:#0000ff'>null</span>)</div>
<div class='t' style='left:44px;transform:translateX(-100%);top:677.01px;font-size:18.25px;color:#2b8aa6;font-weight:400;font-family:"Liberation Mono",monospace;-webkit-text-stroke:0.2px currentColor;'>1554</div>
<div class='t' style='left:61.700000000000045px;top:677.01px;font-size:18.25px;color:#000;font-weight:400;font-family:"Liberation Mono",monospace;-webkit-text-stroke:0.3px currentColor;'>        <span style='color:#0000ff'>throw</span> Error.ArgumentNull(nameof (func));</div>
</div>
<div class='a' style='left:0px;top:2054px;width:2880px;height:34px;background:#007acc;'></div>
<div class='t' style='left:16px;top:2063.04px;font-size:17.6px;color:#ffffff;font-weight:400;'>5,183 ms in 5043 intervals at 1 thread</div>
<svg class='a' style='left:2856px;top:2066px;' width='20' height='20' viewBox='0 0 20 20'><rect x='14' y='2' width='3' height='3' fill='#cfe3f3'/><rect x='10' y='7' width='3' height='3' fill='#cfe3f3'/><rect x='14' y='7' width='3' height='3' fill='#cfe3f3'/><rect x='6' y='12' width='3' height='3' fill='#cfe3f3'/><rect x='10' y='12' width='3' height='3' fill='#cfe3f3'/><rect x='14' y='12' width='3' height='3' fill='#cfe3f3'/></svg>
<div class='a' style='left:0px;top:0px;width:1px;height:2089px;background:#2b2b2b;'></div>
<div class='a' style='left:2878px;top:0px;width:2px;height:2089px;background:#2b2b2b;'></div>
<div class='a' style='left:0px;top:2088px;width:2880px;height:1px;background:#2b2b2b;'></div>
</body></html>
